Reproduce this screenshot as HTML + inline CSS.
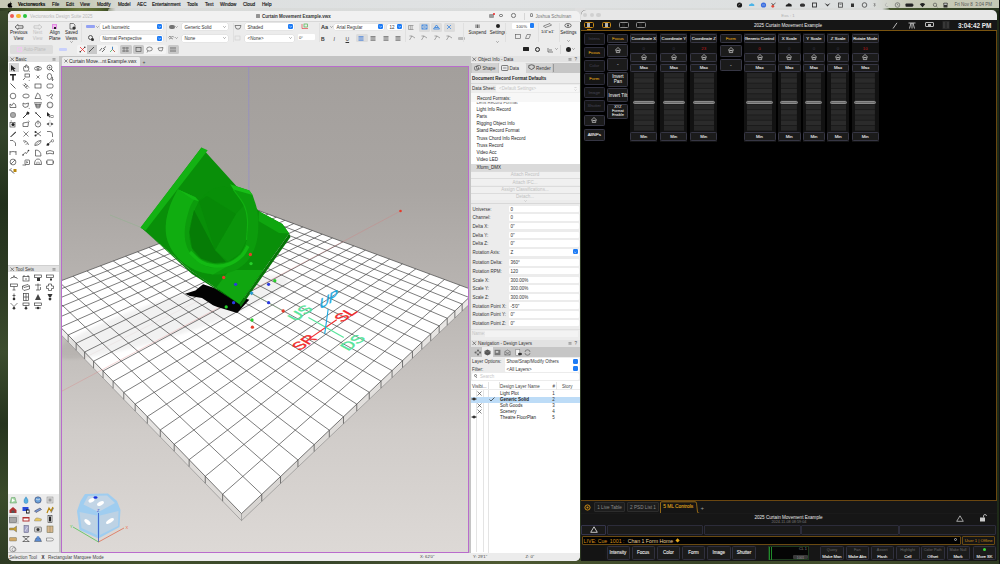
<!DOCTYPE html><html><head><meta charset="utf-8"><style>
*{margin:0;padding:0;box-sizing:border-box}
html,body{width:1000px;height:564px;overflow:hidden;background:#1f2a18;font-family:"Liberation Sans", sans-serif;}
.a{position:absolute}
.t{position:absolute;white-space:nowrap;line-height:1}
</style></head><body>
<div class="a" style="left:0px;top:0px;width:1000px;height:564px;background:linear-gradient(90deg,#26331e 0%,#34452a 30%,#2a3520 60%,#1e2a18 100%);"></div><div class="a" style="left:0px;top:11px;width:8px;height:550px;background:linear-gradient(180deg,#3a4a2c 0%,#2a3822 10%,#34442a 22%,#22301c 35%,#2e3c24 50%,#3c4c2e 62%,#26341e 75%,#3a4a2a 88%,#2e3c24 100%);"></div><div class="a" style="left:0px;top:8.2px;width:1000px;height:3px;background:linear-gradient(90deg,#2e3c24,#4a5a2c 2%,#5e6e34 4%,#52622e 6%,#6a7a3c 8%,#55652e 10%,#3a4a28 11%);"></div><div class="a" style="left:108px;top:8.3px;width:782px;height:3px;background:linear-gradient(90deg,#9aa08a,#d8dad8 1%,#dadcdc 50%,#d8dad8 99%,#6a7a5a);border-radius:3px 3px 0 0"></div><div class="a" style="left:575px;top:8.3px;width:10px;height:14px;background:#dedede;"></div><div class="a" style="left:890px;top:8.2px;width:110px;height:3px;background:linear-gradient(90deg,#4a5a30,#3a4a28 40%,#2a3520);"></div><div class="a" style="left:0px;top:0px;width:999px;height:8.4px;background:linear-gradient(90deg,#c6c9b6 0%,#c9ccba 9%,#dcdfdf 13%,#e0e2e3 50%,#dcdfdf 87%,#c8cbb8 91%,#c4c7b4 100%);"></div><div class="a" style="left:0px;top:560px;width:1000px;height:4px;background:linear-gradient(90deg,#2e3a22,#44522c 15%,#36442a 30%,#4e5a32 50%,#3a4628 70%,#46522e 85%,#2e3a22);"></div><div class="a" style="left:999px;top:0px;width:1px;height:564px;background:#111;"></div><svg class="a" style="left:6.8px;top:1.2px;" width="6" height="7" viewBox="0 0 6 7"><path d="M3,2.3 Q4.2,1.8 5,2.5 Q4.2,3.2 4.4,4.2 Q4.6,5.2 5.4,5.4 Q4.8,6.8 4,6.7 Q3.5,6.5 3,6.6 Q2.5,6.7 2,6.7 Q0.8,6.2 0.6,4.4 Q0.6,2.4 2.2,2.2 Q2.6,2.2 3,2.3 Z M3,2 Q3.1,0.8 4.1,0.6 Q4.1,1.7 3,2 Z" fill="#000"/></svg><div class="t" style="left:18px;top:3.37px;font-size:4.6px;color:#0a0a0a;font-weight:bold;-webkit-text-stroke:0.12px #0a0a0a;">Vectorworks</div><div class="t" style="left:52px;top:3.37px;font-size:4.6px;color:#0a0a0a;font-weight:normal;-webkit-text-stroke:0.12px #0a0a0a;">File</div><div class="t" style="left:66px;top:3.37px;font-size:4.6px;color:#0a0a0a;font-weight:normal;-webkit-text-stroke:0.12px #0a0a0a;">Edit</div><div class="t" style="left:80px;top:3.37px;font-size:4.6px;color:#0a0a0a;font-weight:normal;-webkit-text-stroke:0.12px #0a0a0a;">View</div><div class="t" style="left:97px;top:3.37px;font-size:4.6px;color:#0a0a0a;font-weight:normal;-webkit-text-stroke:0.12px #0a0a0a;">Modify</div><div class="t" style="left:118px;top:3.37px;font-size:4.6px;color:#0a0a0a;font-weight:normal;-webkit-text-stroke:0.12px #0a0a0a;">Model</div><div class="t" style="left:137px;top:3.37px;font-size:4.6px;color:#0a0a0a;font-weight:normal;-webkit-text-stroke:0.12px #0a0a0a;">AEC</div><div class="t" style="left:152px;top:3.37px;font-size:4.6px;color:#0a0a0a;font-weight:normal;-webkit-text-stroke:0.12px #0a0a0a;">Entertainment</div><div class="t" style="left:187px;top:3.37px;font-size:4.6px;color:#0a0a0a;font-weight:normal;-webkit-text-stroke:0.12px #0a0a0a;">Tools</div><div class="t" style="left:205px;top:3.37px;font-size:4.6px;color:#0a0a0a;font-weight:normal;-webkit-text-stroke:0.12px #0a0a0a;">Text</div><div class="t" style="left:220px;top:3.37px;font-size:4.6px;color:#0a0a0a;font-weight:normal;-webkit-text-stroke:0.12px #0a0a0a;">Window</div><div class="t" style="left:243px;top:3.37px;font-size:4.6px;color:#0a0a0a;font-weight:normal;-webkit-text-stroke:0.12px #0a0a0a;">Cloud</div><div class="t" style="left:262px;top:3.37px;font-size:4.6px;color:#0a0a0a;font-weight:normal;-webkit-text-stroke:0.12px #0a0a0a;">Help</div><div class="t" style="left:954.5px;top:3.42px;font-size:4.5px;color:#555;font-weight:normal;">Fri Nov 8&nbsp; 3:04 PM</div><svg class="a" style="left:735.5px;top:1.5px;" width="7" height="6" viewBox="0 0 7 6"><circle cx="3.5" cy="3" r="2.6" fill="#1a1a1a"/><path d="M2,3.5 L4.5,1.8" stroke="#bbb" stroke-width="0.5"/></svg><svg class="a" style="left:748.0px;top:1.5px;" width="7" height="6" viewBox="0 0 7 6"><path d="M1,4 Q0.5,2 2.5,2 Q3.5,0.5 5,1.8 Q6.8,2 6.3,4 Z" fill="#4ab4e8"/></svg><svg class="a" style="left:759.5px;top:1.5px;" width="7" height="6" viewBox="0 0 7 6"><circle cx="3.5" cy="3" r="2.6" fill="#3a6ee0"/><path d="M2,3 H5" stroke="#cde" stroke-width="0.5"/></svg><svg class="a" style="left:769.5px;top:1.5px;" width="7" height="6" viewBox="0 0 7 6"><path d="M1.5,1 L3,3 L5.5,1 M3,3 V5" stroke="#333" stroke-width="0.7" fill="none"/><circle cx="2.8" cy="4.3" r="1.4" fill="#e04a3a"/></svg><svg class="a" style="left:784.5px;top:1.5px;" width="7" height="6" viewBox="0 0 7 6"><path d="M0.8,4.5 Q0.3,2.3 2.5,2.2 Q3.5,0.3 5.2,1.8 Q7.2,2 6.6,4.5 Z" fill="#222"/></svg><svg class="a" style="left:799.0px;top:1.5px;" width="7" height="6" viewBox="0 0 7 6"><path d="M1,3 Q1,1 3.5,1.5 Q6,1 6,3 Q6.5,5 3.5,4.8 Q0.5,5 1,3 Z" fill="#333"/></svg><svg class="a" style="left:811.0px;top:1.5px;" width="7" height="6" viewBox="0 0 7 6"><rect x="1.5" y="1" width="4" height="4" fill="none" stroke="#333" stroke-width="0.9"/></svg><svg class="a" style="left:824.0px;top:1.5px;" width="7" height="6" viewBox="0 0 7 6"><path d="M0.5,1 L3.5,4.5 L6.5,1 L3.5,2.8 Z" fill="#333"/></svg><svg class="a" style="left:836.5px;top:1.5px;" width="7" height="6" viewBox="0 0 7 6"><rect x="1.5" y="1" width="4" height="4.2" fill="none" stroke="#444" stroke-width="0.8"/><path d="M2.5,2.5 H4.5" stroke="#444" stroke-width="0.5"/></svg><svg class="a" style="left:849.0px;top:1.5px;" width="7" height="6" viewBox="0 0 7 6"><path d="M2,1.5 H5 V5 H2 Z" fill="#333"/></svg><svg class="a" style="left:860.5px;top:1.5px;" width="7" height="6" viewBox="0 0 7 6"><circle cx="3.5" cy="3" r="2.3" fill="none" stroke="#444" stroke-width="0.8"/></svg><svg class="a" style="left:871.0px;top:1.5px;" width="7" height="6" viewBox="0 0 7 6"><path d="M2.5,1.5 L4.5,3.5 L3.5,4.5 V1 L4.5,2 L2.5,4" stroke="#777" stroke-width="0.5" fill="none"/></svg><svg class="a" style="left:882.5px;top:1.5px;" width="7" height="6" viewBox="0 0 7 6"><path d="M4,1 Q1.5,1.8 2.5,4 Q3.8,5.2 5.2,4.3" stroke="#aaa" stroke-width="0.6" fill="none"/></svg><svg class="a" style="left:894.0px;top:1.5px;" width="7" height="6" viewBox="0 0 7 6"><circle cx="3.5" cy="3" r="2.3" fill="none" stroke="#555" stroke-width="0.6"/><path d="M3.5,1.8 L3.5,3 L4.5,3.6" stroke="#555" stroke-width="0.5" fill="none"/></svg><svg class="a" style="left:905.2px;top:1.5px;" width="9" height="6" viewBox="0 0 9 6"><rect x="0.5" y="1.5" width="7.5" height="3.2" rx="0.8" fill="#222"/><rect x="8.2" y="2.5" width="0.6" height="1.2" fill="#222"/></svg><svg class="a" style="left:919.0px;top:1.5px;" width="7" height="6" viewBox="0 0 7 6"><path d="M0.8,2.2 Q3.5,-0.2 6.2,2.2 L3.5,5.2 Z" fill="#222"/></svg><svg class="a" style="left:931.5px;top:1.5px;" width="7" height="6" viewBox="0 0 7 6"><circle cx="3" cy="2.8" r="1.7" fill="none" stroke="#444" stroke-width="0.6"/><path d="M4.2,4 L5.5,5.2" stroke="#444" stroke-width="0.6"/></svg><svg class="a" style="left:941.5px;top:1.5px;" width="7" height="6" viewBox="0 0 7 6"><rect x="1.5" y="0.8" width="4" height="4.8" rx="0.5" fill="#333"/><rect x="2.2" y="1.5" width="2.6" height="1.4" fill="#ccc"/></svg><div class="a" style="left:7.5px;top:11px;width:572.5px;height:550px;background:#ececec;border-radius:5px"></div><div class="a" style="left:7.5px;top:11px;width:572.5px;height:10px;background:#f1f1f1;border-radius:5px 5px 0 0"></div><div class="a" style="left:7.5px;top:20.6px;width:572.5px;height:0.6px;background:#d8d8d8;"></div><div class="a" style="left:9.8px;top:13.8px;width:4.4px;height:4.4px;border-radius:50%;background:#ee5b55"></div><div class="a" style="left:16.400000000000002px;top:13.8px;width:4.4px;height:4.4px;border-radius:50%;background:#f5b731"></div><div class="a" style="left:23.0px;top:13.8px;width:4.4px;height:4.4px;border-radius:50%;background:#2bc43f"></div><div class="t" style="left:30px;top:15.13px;font-size:4.5px;color:#b9b9b9;font-weight:normal;">Vectorworks Design Suite 2025</div><div class="a" style="left:255.5px;top:13.5px;width:4px;height:4.5px;background:#555;border-radius:0.5px;opacity:0.6"></div><div class="t" style="left:262px;top:14.93px;font-size:4.5px;color:#333;font-weight:bold;">Curtain Movement Example.vwx</div><div class="a" style="left:489px;top:13.5px;width:5px;height:4px;background:#777;border-radius:1px;opacity:0.7"></div><div class="a" style="left:492.5px;top:12.8px;width:2.2px;height:2.2px;border-radius:50%;background:#e22"></div><div class="a" style="left:499px;top:13.5px;width:3.5px;height:3.5px;border-radius:50%;border:0.7px solid #666"></div><div class="a" style="left:511px;top:13.2px;width:4.5px;height:4.5px;border-radius:50%;border:0.8px solid #777"></div><div class="a" style="left:524px;top:12.5px;width:0.5px;height:7px;background:#d6d6d6;"></div><div class="a" style="left:530px;top:13.2px;width:3px;height:4.2px;border-radius:50% 50% 1px 1px;border:0.6px solid #888"></div><div class="t" style="left:535.5px;top:14.83px;font-size:4.5px;color:#777;font-weight:normal;">Joshua Schulman</div><svg class="a" style="left:13.7px;top:23.6px;" width="10" height="6" viewBox="0 0 10 6"><path d="M1,3 L4,0.5 L4,1.8 L9,1.8 L9,4.2 L4,4.2 L4,5.5 Z" fill="none" stroke="#333" stroke-width="0.7"/></svg><svg class="a" style="left:32.6px;top:23.6px;" width="10" height="6" viewBox="0 0 10 6"><path d="M9,3 L6,0.5 L6,1.8 L1,1.8 L1,4.2 L6,4.2 L6,5.5 Z" fill="none" stroke="#bbb" stroke-width="0.7"/></svg><div class="t" style="left:-31.3px;width:100px;text-align:center;top:31.43px;font-size:4.5px;color:#222;font-weight:normal;">Previous</div><div class="t" style="left:-31.3px;width:100px;text-align:center;top:36.82px;font-size:4.5px;color:#222;font-weight:normal;">View</div><div class="t" style="left:-12.399999999999999px;width:100px;text-align:center;top:31.43px;font-size:4.5px;color:#c0c0c0;font-weight:normal;">Next</div><div class="t" style="left:-12.399999999999999px;width:100px;text-align:center;top:36.82px;font-size:4.5px;color:#c0c0c0;font-weight:normal;">View</div><div class="a" style="left:52.2px;top:23.5px;width:5px;height:5.5px;background:#f0b8f0;border:0.6px solid #e28ae2"></div><div class="a" style="left:54px;top:26.5px;width:1.8px;height:2px;background:#222;"></div><div class="t" style="left:4.700000000000003px;width:100px;text-align:center;top:31.43px;font-size:4.5px;color:#222;font-weight:normal;">Align</div><div class="t" style="left:4.700000000000003px;width:100px;text-align:center;top:36.82px;font-size:4.5px;color:#222;font-weight:normal;">Plane</div><svg class="a" style="left:68.5px;top:23px;" width="7" height="6.5" viewBox="0 0 7 6.5"><path d="M1,0.5 H4.5 L6,2 V6 H1 Z" fill="none" stroke="#333" stroke-width="0.6"/><circle cx="5" cy="5" r="1.6" fill="#333"/></svg><div class="t" style="left:21.400000000000006px;width:100px;text-align:center;top:31.43px;font-size:4.5px;color:#222;font-weight:normal;">Saved</div><div class="t" style="left:21.400000000000006px;width:100px;text-align:center;top:36.82px;font-size:4.5px;color:#222;font-weight:normal;">Views</div><svg class="a" style="left:69.8px;top:41px;" width="3" height="2" viewBox="0 0 3 2"><path d="M0.3,0.3 L1.5,1.5 L2.7,0.3" fill="none" stroke="#555" stroke-width="0.5"/></svg><div class="a" style="left:81.3px;top:22.5px;width:0.5px;height:19px;background:#e0e0e0;"></div><div class="a" style="left:86px;top:25px;width:9px;height:3px;background:#7d8ef5;border-radius:1px;opacity:0.8"></div><svg class="a" style="left:95.5px;top:25.5px;" width="3" height="2" viewBox="0 0 3 2"><path d="M0.3,0.3 L1.5,1.5 L2.7,0.3" fill="none" stroke="#555" stroke-width="0.5"/></svg><div class="a" style="left:100px;top:23.3px;width:62.5px;height:6.8px;background:#fff;border-radius:1.5px;box-shadow:0 0 0 0.3px #d0d0d0"></div><div class="t" style="left:102.5px;top:25.62px;font-size:4.5px;color:#333;font-weight:normal;">Left Isometric</div><div class="a" style="left:156.7px;top:24.1px;width:5.2px;height:5.2px;background:#1e7cf5;border-radius:1.2px"></div><svg class="a" style="left:156.7px;top:24.1px;" width="5.2" height="5.2" viewBox="0 0 5.2 5.2"><path d="M1.5,2.1 L2.6,3.2 L3.7,2.1" fill="none" stroke="#fff" stroke-width="0.6"/></svg><div class="a" style="left:100px;top:34.8px;width:62.5px;height:6.8px;background:#fff;border-radius:1.5px;box-shadow:0 0 0 0.3px #d0d0d0"></div><div class="t" style="left:102.5px;top:37.12px;font-size:4.5px;color:#333;font-weight:normal;">Normal Perspective</div><div class="a" style="left:156.7px;top:35.599999999999994px;width:5.2px;height:5.2px;background:#1e7cf5;border-radius:1.2px"></div><svg class="a" style="left:156.7px;top:35.599999999999994px;" width="5.2" height="5.2" viewBox="0 0 5.2 5.2"><path d="M1.5,2.1 L2.6,3.2 L3.7,2.1" fill="none" stroke="#fff" stroke-width="0.6"/></svg><div class="a" style="left:87.5px;top:34.5px;width:5.5px;height:5.5px;border-radius:50%;border:0.7px solid #555"></div><div class="a" style="left:90.5px;top:37.5px;width:3px;height:3px;border-radius:50%;background:#333"></div><div class="a" style="left:165.5px;top:22.5px;width:0.5px;height:19px;background:#e0e0e0;"></div><div class="a" style="left:168.5px;top:24.5px;width:6px;height:4.5px;background:#555;border-radius:2px;opacity:0.8"></div><svg class="a" style="left:175px;top:25.5px;" width="3" height="2" viewBox="0 0 3 2"><path d="M0.3,0.3 L1.5,1.5 L2.7,0.3" fill="none" stroke="#555" stroke-width="0.5"/></svg><svg class="a" style="left:168px;top:35px;" width="7" height="5" viewBox="0 0 7 5"><path d="M0.5,2.5 L2,1 L3,2.5 L4.5,1 L6,2.5 M1,4 L3,3 L5,4" fill="none" stroke="#555" stroke-width="0.6"/></svg><svg class="a" style="left:175px;top:37px;" width="3" height="2" viewBox="0 0 3 2"><path d="M0.3,0.3 L1.5,1.5 L2.7,0.3" fill="none" stroke="#555" stroke-width="0.5"/></svg><div class="a" style="left:182px;top:23.3px;width:46px;height:6.8px;background:#fff;border-radius:1.5px;box-shadow:0 0 0 0.3px #d0d0d0"></div><div class="t" style="left:184.5px;top:25.62px;font-size:4.5px;color:#333;font-weight:normal;">Generic Solid</div><svg class="a" style="left:223px;top:25.7px;" width="3" height="2" viewBox="0 0 3 2"><path d="M0.3,0.3 L1.5,1.5 L2.7,0.3" fill="none" stroke="#555" stroke-width="0.5"/></svg><div class="a" style="left:182px;top:34.8px;width:46px;height:6.8px;background:#fff;border-radius:1.5px;box-shadow:0 0 0 0.3px #d0d0d0"></div><div class="t" style="left:184.5px;top:37.12px;font-size:4.5px;color:#333;font-weight:normal;">None</div><svg class="a" style="left:223px;top:37.199999999999996px;" width="3" height="2" viewBox="0 0 3 2"><path d="M0.3,0.3 L1.5,1.5 L2.7,0.3" fill="none" stroke="#555" stroke-width="0.5"/></svg><div class="a" style="left:233px;top:22.5px;width:0.5px;height:19px;background:#e0e0e0;"></div><svg class="a" style="left:233.5px;top:24px;" width="8" height="6" viewBox="0 0 8 6"><path d="M1,1.5 H7 L6,4.5 Q4,5.8 2,4.5 Z" fill="none" stroke="#555" stroke-width="0.7"/></svg><svg class="a" style="left:234px;top:35px;" width="7" height="6" viewBox="0 0 7 6"><rect x="1" y="1" width="5" height="4" fill="none" stroke="#ccc" stroke-width="0.6"/></svg><div class="a" style="left:245px;top:23.3px;width:49px;height:6.8px;background:#fff;border-radius:1.5px;box-shadow:0 0 0 0.3px #d0d0d0"></div><div class="t" style="left:247.5px;top:25.62px;font-size:4.5px;color:#333;font-weight:normal;">Shaded</div><div class="a" style="left:288.2px;top:24.1px;width:5.2px;height:5.2px;background:#1e7cf5;border-radius:1.2px"></div><svg class="a" style="left:288.2px;top:24.1px;" width="5.2" height="5.2" viewBox="0 0 5.2 5.2"><path d="M1.5,2.1 L2.6,3.2 L3.7,2.1" fill="none" stroke="#fff" stroke-width="0.6"/></svg><div class="a" style="left:245px;top:34.8px;width:49px;height:6.8px;background:#fff;border-radius:1.5px;box-shadow:0 0 0 0.3px #d0d0d0"></div><div class="t" style="left:247.5px;top:37.12px;font-size:4.5px;color:#333;font-weight:normal;">&lt;None&gt;</div><svg class="a" style="left:289px;top:37.199999999999996px;" width="3" height="2" viewBox="0 0 3 2"><path d="M0.3,0.3 L1.5,1.5 L2.7,0.3" fill="none" stroke="#555" stroke-width="0.5"/></svg><svg class="a" style="left:301px;top:22.5px;" width="8" height="7" viewBox="0 0 8 7"><path d="M1,5.5 H7 M1,1 V5.5" stroke="#d33" stroke-width="0.6" fill="none"/><rect x="3" y="1" width="3.5" height="3" fill="none" stroke="#3a3" stroke-width="0.6"/></svg><div class="a" style="left:297.5px;top:33.8px;width:17px;height:6.5px;background:#fff;border-radius:1px"></div><div class="t" style="left:299px;top:35.99px;font-size:4.2px;color:#333;font-weight:normal;">0°</div><div class="a" style="left:318.5px;top:22.5px;width:0.5px;height:19px;background:#e0e0e0;"></div><div class="t" style="left:321px;top:25.28px;font-size:5.5px;color:#333;font-weight:bold;">Aa</div><svg class="a" style="left:329.5px;top:25.5px;" width="3" height="2" viewBox="0 0 3 2"><path d="M0.3,0.3 L1.5,1.5 L2.7,0.3" fill="none" stroke="#555" stroke-width="0.5"/></svg><div class="a" style="left:334px;top:23.5px;width:50px;height:6.8px;background:#fff;border-radius:1.5px;box-shadow:0 0 0 0.3px #d0d0d0"></div><div class="t" style="left:336.5px;top:25.82px;font-size:4.5px;color:#333;font-weight:normal;">Arial Regular</div><div class="a" style="left:378.2px;top:24.3px;width:5.2px;height:5.2px;background:#1e7cf5;border-radius:1.2px"></div><svg class="a" style="left:378.2px;top:24.3px;" width="5.2" height="5.2" viewBox="0 0 5.2 5.2"><path d="M1.5,2.1 L2.6,3.2 L3.7,2.1" fill="none" stroke="#fff" stroke-width="0.6"/></svg><div class="a" style="left:387px;top:23.5px;width:15.5px;height:6.8px;background:#fff;border-radius:1.5px;box-shadow:0 0 0 0.3px #d0d0d0"></div><div class="t" style="left:389.5px;top:25.82px;font-size:4.5px;color:#333;font-weight:normal;">12</div><div class="a" style="left:396.7px;top:24.3px;width:5.2px;height:5.2px;background:#1e7cf5;border-radius:1.2px"></div><svg class="a" style="left:396.7px;top:24.3px;" width="5.2" height="5.2" viewBox="0 0 5.2 5.2"><path d="M1.5,2.1 L2.6,3.2 L3.7,2.1" fill="none" stroke="#fff" stroke-width="0.6"/></svg><div class="t" style="left:321.0px;top:36.75px;font-size:5px;color:#333;font-weight:bold;">B</div><div class="t" style="left:333.5px;top:36.75px;font-size:5px;color:#333;font-weight:normal;font-style:italic;">I</div><div class="t" style="left:345.5px;top:36.75px;font-size:5px;color:#333;font-weight:normal;text-decoration:underline;">U</div><div class="a" style="left:355.5px;top:33.5px;width:12px;height:8.5px;background:#dcdcdc;border-radius:1.5px"></div><svg class="a" style="left:358px;top:35.5px;" width="6" height="5" viewBox="0 0 6 5"><line x1="0.5" x2="5.5" y1="0.5" y2="0.5" stroke="#2b6fd6" stroke-width="0.6"/><line x1="0.5" x2="5.5" y1="1.8" y2="1.8" stroke="#2b6fd6" stroke-width="0.6"/><line x1="0.5" x2="5.5" y1="3.1" y2="3.1" stroke="#2b6fd6" stroke-width="0.6"/><line x1="0.5" x2="5.5" y1="4.4" y2="4.4" stroke="#2b6fd6" stroke-width="0.6"/></svg><svg class="a" style="left:370px;top:35.5px;" width="6" height="5" viewBox="0 0 6 5"><line x1="0.5" x2="5.5" y1="0.5" y2="0.5" stroke="#444" stroke-width="0.6"/><line x1="0.5" x2="5.5" y1="1.8" y2="1.8" stroke="#444" stroke-width="0.6"/><line x1="0.5" x2="5.5" y1="3.1" y2="3.1" stroke="#444" stroke-width="0.6"/><line x1="0.5" x2="5.5" y1="4.4" y2="4.4" stroke="#444" stroke-width="0.6"/></svg><svg class="a" style="left:383px;top:35.5px;" width="6" height="5" viewBox="0 0 6 5"><line x1="0.5" x2="5.5" y1="0.5" y2="0.5" stroke="#444" stroke-width="0.6"/><line x1="0.5" x2="5.5" y1="1.8" y2="1.8" stroke="#444" stroke-width="0.6"/><line x1="0.5" x2="5.5" y1="3.1" y2="3.1" stroke="#444" stroke-width="0.6"/><line x1="0.5" x2="5.5" y1="4.4" y2="4.4" stroke="#444" stroke-width="0.6"/></svg><svg class="a" style="left:395px;top:35.5px;" width="6" height="5" viewBox="0 0 6 5"><line x1="0.5" x2="5.5" y1="0.5" y2="0.5" stroke="#444" stroke-width="0.6"/><line x1="0.5" x2="5.5" y1="1.8" y2="1.8" stroke="#444" stroke-width="0.6"/><line x1="0.5" x2="5.5" y1="3.1" y2="3.1" stroke="#444" stroke-width="0.6"/><line x1="0.5" x2="5.5" y1="4.4" y2="4.4" stroke="#444" stroke-width="0.6"/></svg><div class="a" style="left:405px;top:22.5px;width:0.5px;height:19px;background:#e0e0e0;"></div><svg class="a" style="left:408px;top:25px;" width="7" height="5" viewBox="0 0 7 5"><path d="M0.5,0.5 V4.5 M2.3,0.5 V4.5 M4.1,0.5 V4.5 M0.5,0.5 H5.5 M0.5,4.5 H5.5" stroke="#666" stroke-width="0.5" fill="none"/></svg><div class="a" style="left:418.5px;top:22.5px;width:11px;height:9px;background:#dcdcdc;border-radius:1.5px"></div><div class="a" style="left:431px;top:22.5px;width:11px;height:9px;background:#dcdcdc;border-radius:1.5px"></div><div class="a" style="left:443.5px;top:22.5px;width:11px;height:9px;background:#dcdcdc;border-radius:1.5px"></div><svg class="a" style="left:420.5px;top:24px;" width="7" height="6" viewBox="0 0 7 6"><rect x="1" y="1" width="5" height="4" fill="none" stroke="#2b7de0" stroke-width="0.8"/><path d="M1,1 L6,5 M6,1 L1,5" stroke="#2b7de0" stroke-width="0.5"/></svg><svg class="a" style="left:433px;top:24px;" width="7" height="6" viewBox="0 0 7 6"><path d="M0.5,5 L3.5,1 L6.5,5 Z M2,3.5 H5" fill="none" stroke="#2b7de0" stroke-width="0.8"/></svg><svg class="a" style="left:446px;top:24px;" width="6" height="6" viewBox="0 0 6 6"><path d="M1,1 L5,5 M5,1 L1,5" stroke="#2b7de0" stroke-width="0.7"/></svg><svg class="a" style="left:408.5px;top:35px;" width="7" height="6" viewBox="0 0 7 6"><path d="M0.5,5 L3,1 L6,3 M0.5,1 H3" fill="none" stroke="#777" stroke-width="0.6"/></svg><svg class="a" style="left:421px;top:35px;" width="7" height="6" viewBox="0 0 7 6"><path d="M0.5,5 L3,1 L6,3 M0.5,1 H3" fill="none" stroke="#777" stroke-width="0.6"/></svg><svg class="a" style="left:433.5px;top:35px;" width="7" height="6" viewBox="0 0 7 6"><path d="M0.5,5 L3,1 L6,3 M0.5,1 H3" fill="none" stroke="#777" stroke-width="0.6"/></svg><svg class="a" style="left:446px;top:35px;" width="7" height="6" viewBox="0 0 7 6"><path d="M0.5,5 L3,1 L6,3 M0.5,1 H3" fill="none" stroke="#777" stroke-width="0.6"/></svg><div class="a" style="left:457.5px;top:36.5px;width:7px;height:3px;background:#999;border-radius:1px;opacity:0.6"></div><div class="a" style="left:463px;top:22.5px;width:0.5px;height:19px;background:#e0e0e0;"></div><svg class="a" style="left:474.8px;top:23.5px;" width="5" height="4.5" viewBox="0 0 5 4.5"><path d="M1,0.5 V4 M2.5,0.5 V4 M4,0.5 V4" stroke="#444" stroke-width="0.8"/></svg><div class="t" style="left:427.3px;width:100px;text-align:center;top:31.12px;font-size:4.5px;color:#222;font-weight:normal;">Suspend</div><div class="a" style="left:495.5px;top:23.5px;width:4.5px;height:4.5px;border-radius:50%;background:#222"></div><div class="t" style="left:447.8px;width:100px;text-align:center;top:31.12px;font-size:4.5px;color:#222;font-weight:normal;">Settings</div><svg class="a" style="left:496.3px;top:41px;" width="3" height="2" viewBox="0 0 3 2"><path d="M0.3,0.3 L1.5,1.5 L2.7,0.3" fill="none" stroke="#555" stroke-width="0.5"/></svg><div class="a" style="left:505px;top:22.5px;width:0.5px;height:19px;background:#e0e0e0;"></div><div class="a" style="left:512px;top:23px;width:21.5px;height:6px;background:#fff;border-radius:1px"></div><div class="t" style="left:516px;top:24.93px;font-size:4.3px;color:#333;font-weight:normal;">100%</div><div class="a" style="left:529.5px;top:23.3px;width:4.2px;height:4.4px;background:#1e7cf5;border-radius:1px"></div><svg class="a" style="left:513.5px;top:33px;" width="8" height="7" viewBox="0 0 8 7"><rect x="1.5" y="1.5" width="5" height="4" fill="none" stroke="#555" stroke-width="0.6"/></svg><svg class="a" style="left:523.5px;top:33px;" width="8" height="7" viewBox="0 0 8 7"><path d="M1.5,5.5 L3,1.5 H6.5 L5,5.5 Z" fill="none" stroke="#555" stroke-width="0.6"/></svg><div class="a" style="left:538px;top:22.5px;width:0.5px;height:19px;background:#e0e0e0;"></div><svg class="a" style="left:543px;top:23px;" width="9" height="5" viewBox="0 0 9 5"><path d="M0.5,3 L7,0.5 L8.5,2.2 L2,4.6 Z" fill="none" stroke="#444" stroke-width="0.6"/></svg><div class="t" style="left:497.5px;width:100px;text-align:center;top:30.43px;font-size:4.3px;color:#222;font-weight:normal;">1/4"=1'</div><div class="a" style="left:558.5px;top:22.5px;width:0.5px;height:19px;background:#e0e0e0;"></div><svg class="a" style="left:564px;top:22.5px;" width="8" height="6" viewBox="0 0 8 6"><ellipse cx="4" cy="2.5" rx="3.2" ry="2" fill="none" stroke="#444" stroke-width="0.7"/><circle cx="4" cy="2.5" r="0.9" fill="#444"/></svg><div class="t" style="left:518.5px;width:100px;text-align:center;top:30.62px;font-size:4.5px;color:#222;font-weight:normal;">Settings</div><svg class="a" style="left:567px;top:39.5px;" width="3" height="2" viewBox="0 0 3 2"><path d="M0.3,0.3 L1.5,1.5 L2.7,0.3" fill="none" stroke="#555" stroke-width="0.5"/></svg><div class="a" style="left:9.5px;top:45px;width:43.5px;height:8.6px;background:#dcdcdc;border-radius:1.5px"></div><div class="a" style="left:17px;top:46.5px;width:5px;height:5px;background:none;border:0.6px solid #f0c8f0"></div><div class="t" style="left:23.5px;top:48.32px;font-size:4.5px;color:#bdbdbd;font-weight:normal;">Auto-Plane</div><div class="a" style="left:53.5px;top:45px;width:20px;height:8.6px;background:#ececec;border-radius:1.5px"></div><div class="a" style="left:59px;top:48px;width:8px;height:2.5px;background:#c9d0fb;border-radius:1px"></div><div class="a" style="left:76.5px;top:45px;width:41.5px;height:8.6px;background:#f4f4f4;border-radius:1.5px"></div><div class="a" style="left:86.5px;top:45px;width:10px;height:8.6px;background:#c8c8c8;"></div><svg class="a" style="left:78.5px;top:46px;" width="7" height="7" viewBox="0 0 7 7"><path d="M1,1 L6,6 M6,1 L1,6" stroke="#e33" stroke-width="0.8"/><circle cx="1.2" cy="5.8" r="0.8" fill="#333"/><circle cx="5.8" cy="1.2" r="0.8" fill="#333"/></svg><svg class="a" style="left:88px;top:46px;" width="7" height="7" viewBox="0 0 7 7"><path d="M1,6 L6,1" stroke="#333" stroke-width="0.8"/></svg><svg class="a" style="left:99px;top:46px;" width="8" height="7" viewBox="0 0 8 7"><path d="M0.5,5 L3,2 M3,6 L6,3 M4,3 L7,0.5" stroke="#333" stroke-width="0.7"/></svg><svg class="a" style="left:109px;top:46px;" width="7" height="7" viewBox="0 0 7 7"><path d="M3.5,3.5 V0.8 M3.5,3.5 L1,6 M3.5,3.5 L6,6" stroke="#2aa64a" stroke-width="0.7"/><path d="M3.5,3.5 L6,6" stroke="#e44" stroke-width="0.7"/><path d="M3.5,3.5 V0.8" stroke="#3a6ee8" stroke-width="0.7"/></svg><div class="a" style="left:120px;top:45px;width:11.5px;height:8.6px;background:#c8c8c8;border-radius:1.5px"></div><svg class="a" style="left:121px;top:46px;" width="9" height="7" viewBox="0 0 9 7"><path d="M1,2 H8 M1,5 H8 M3,1 V6 M6,1 V6" stroke="#555" stroke-width="0.6"/></svg><div class="a" style="left:133px;top:45px;width:32.5px;height:8.6px;background:#f4f4f4;border-radius:1.5px"></div><div class="a" style="left:133px;top:45px;width:11px;height:8.6px;background:#c8c8c8;border-radius:1.5px"></div><svg class="a" style="left:135px;top:46px;" width="7" height="7" viewBox="0 0 7 7"><rect x="1" y="1.5" width="5" height="4" fill="none" stroke="#444" stroke-width="0.6"/></svg><svg class="a" style="left:146px;top:46px;" width="7" height="7" viewBox="0 0 7 7"><ellipse cx="3.5" cy="3" rx="2.8" ry="2" fill="none" stroke="#444" stroke-width="0.6"/><path d="M2,5 L1,6.5" stroke="#444" stroke-width="0.6"/></svg><svg class="a" style="left:156.5px;top:46px;" width="7" height="7" viewBox="0 0 7 7"><path d="M1,2 L6,1.5 L5,5 L2,4.5 Z" fill="none" stroke="#444" stroke-width="0.6"/></svg><div class="a" style="left:167.5px;top:45px;width:11px;height:8.6px;background:#c8c8c8;border-radius:1.5px"></div><svg class="a" style="left:169px;top:46px;" width="8" height="7" viewBox="0 0 8 7"><path d="M1,2 H7 M1,5 H7 M2,1 V6 M4,1 V6 M6,1 V6" stroke="#666" stroke-width="0.5"/></svg><div class="a" style="left:522.5px;top:47.3px;width:6px;height:4.2px;background:#222;border-radius:0.5px"></div><div class="a" style="left:535px;top:47px;width:5px;height:5px;border-radius:50%;border:1px solid #222;background:#ddd"></div><svg class="a" style="left:546.5px;top:46.5px;" width="8" height="6" viewBox="0 0 8 6"><path d="M1,1 V5 H6 M2,3 H5" fill="none" stroke="#333" stroke-width="0.6"/></svg><svg class="a" style="left:554.5px;top:48px;" width="3" height="2" viewBox="0 0 3 2"><path d="M0.3,0.3 L1.5,1.5 L2.7,0.3" fill="none" stroke="#555" stroke-width="0.5"/></svg><div class="a" style="left:560px;top:45px;width:0.5px;height:9px;background:#d8d8d8;"></div><div class="a" style="left:566px;top:46.5px;width:5px;height:5px;border-radius:50%;background:#222"></div><svg class="a" style="left:571.5px;top:48px;" width="3" height="2" viewBox="0 0 3 2"><path d="M0.3,0.3 L1.5,1.5 L2.7,0.3" fill="none" stroke="#555" stroke-width="0.5"/></svg><div class="a" style="left:7.5px;top:55.5px;width:572.5px;height:497px;background:#c4c4c4;"></div><div class="a" style="left:8px;top:56px;width:51px;height:496px;background:#ffffff;"></div><div class="a" style="left:8px;top:56px;width:51px;height:6px;background:#e2e2e2;"></div><svg class="a" style="left:9.5px;top:57px;" width="5" height="4.5" viewBox="0 0 5 4.5"><path d="M0.5,0.5 L4,4 M4,0.5 L0.5,4" stroke="#444" stroke-width="0.6"/></svg><div class="t" style="left:15.5px;top:58.02px;font-size:4.5px;color:#333;font-weight:normal;">Basic</div><svg class="a" style="left:52px;top:57.5px;" width="4" height="3.5" viewBox="0 0 4 3.5"><path d="M0.5,0.5 H3.5 M0.5,1.7 H3.5 M0.5,2.9 H3.5" stroke="#777" stroke-width="0.6"/></svg><div class="a" style="left:8.5px;top:62.8px;width:10.5px;height:9.3px;background:#d6d6d6;"></div><div class="a" style="left:8px;top:493.5px;width:51px;height:58.5px;background:#ececec;"></div><svg class="a" style="left:9.4px;top:63.5px;" width="8" height="8" viewBox="0 0 8 8"><path d="M2,1 L2,7 L3.5,5.5 L5,7.5 L6,7 L4.8,5 L6.8,5 Z" fill="#222"/></svg><svg class="a" style="left:21.9px;top:63.5px;" width="8" height="8" viewBox="0 0 8 8"><path d="M2,7 L1.5,4 L2.5,2 L3.5,3.5 L3.8,1 L5,1 L5.2,3.5 L6.5,2.5 L6.8,5 L6,7 Z" stroke="#333" stroke-width="0.65" fill="none"/><path d="M6.5,7.8 L7.5,6.8 L7.5,7.8 Z" fill="#222"/></svg><svg class="a" style="left:34px;top:63.5px;" width="8" height="8" viewBox="0 0 8 8"><ellipse cx="4" cy="4.5" rx="3.6" ry="1.8" stroke="#333" stroke-width="0.65" fill="none"/><path d="M2.5,3.5 Q4,0.5 5.5,3.5" stroke="#333" stroke-width="0.65" fill="none"/><circle cx="4" cy="5" r="1" stroke="#333" stroke-width="0.65" fill="none"/></svg><svg class="a" style="left:46px;top:63.5px;" width="8" height="8" viewBox="0 0 8 8"><circle cx="3.5" cy="3.5" r="2.4" stroke="#333" stroke-width="0.65" fill="none"/><path d="M5.2,5.2 L7.5,7.5" stroke="#333" stroke-width="0.9"/><path d="M3.5,2.5 V4.5 M2.5,3.5 H4.5" stroke="#333" stroke-width="0.5"/></svg><svg class="a" style="left:9.4px;top:72.97px;" width="8" height="8" viewBox="0 0 8 8"><path d="M1,1 H7 V2.5 H4.8 V7.5 H3.2 V2.5 H1 Z" fill="#222"/></svg><svg class="a" style="left:21.9px;top:72.97px;" width="8" height="8" viewBox="0 0 8 8"><rect x="3" y="1" width="4.5" height="3" stroke="#333" stroke-width="0.65" fill="none"/><path d="M3,5 L1,7" stroke="#333" stroke-width="0.65" fill="none"/><path d="M6.5,7.8 L7.5,6.8 L7.5,7.8 Z" fill="#222"/></svg><svg class="a" style="left:34px;top:72.97px;" width="8" height="8" viewBox="0 0 8 8"><path d="M2.5,2.5 L5.5,5.5 M5.5,2.5 L2.5,5.5" stroke="#333" stroke-width="0.6"/></svg><svg class="a" style="left:46px;top:72.97px;" width="8" height="8" viewBox="0 0 8 8"><ellipse cx="3.5" cy="3.5" rx="2.2" ry="3" stroke="#333" stroke-width="0.65" fill="none"/><path d="M6.5,4 V7.5 M5.5,6.5 L6.5,7.5 L7.5,6.5" stroke="#333" stroke-width="0.65" fill="none"/></svg><svg class="a" style="left:9.4px;top:82.44px;" width="8" height="8" viewBox="0 0 8 8"><path d="M1.5,1.5 L6.5,6.5" stroke="#333" stroke-width="0.8"/></svg><svg class="a" style="left:21.9px;top:82.44px;" width="8" height="8" viewBox="0 0 8 8"><path d="M1,2.5 L5.5,7 M2.5,1 L7,5.5 M2,4 L4,2 M3.5,5.5 L5.5,3.5" stroke="#333" stroke-width="0.65" fill="none"/></svg><svg class="a" style="left:34px;top:82.44px;" width="8" height="8" viewBox="0 0 8 8"><rect x="1" y="2" width="6" height="4" stroke="#333" stroke-width="0.65" fill="none"/></svg><svg class="a" style="left:46px;top:82.44px;" width="8" height="8" viewBox="0 0 8 8"><rect x="1" y="2" width="6" height="4" rx="1.5" stroke="#333" stroke-width="0.65" fill="none"/></svg><svg class="a" style="left:9.4px;top:91.91px;" width="8" height="8" viewBox="0 0 8 8"><circle cx="4" cy="4" r="2.8" stroke="#333" stroke-width="0.65" fill="none"/></svg><svg class="a" style="left:21.9px;top:91.91px;" width="8" height="8" viewBox="0 0 8 8"><ellipse cx="4" cy="4" rx="3.2" ry="2" stroke="#333" stroke-width="0.65" fill="none"/></svg><svg class="a" style="left:34px;top:91.91px;" width="8" height="8" viewBox="0 0 8 8"><path d="M1,6.5 L3.5,1 Q6.5,2 6.5,6.5 Z" stroke="#333" stroke-width="0.65" fill="none"/><path d="M6.5,7.8 L7.5,6.8 L7.5,7.8 Z" fill="#222"/></svg><svg class="a" style="left:46px;top:91.91px;" width="8" height="8" viewBox="0 0 8 8"><path d="M0.5,3.5 Q3,4.5 4,3 Q5,1 6.5,2.5 Q7,4.5 5,5 Q4,6 6.5,7" stroke="#333" stroke-width="0.65" fill="none"/></svg><svg class="a" style="left:9.4px;top:101.38px;" width="8" height="8" viewBox="0 0 8 8"><path d="M1,6.5 V3 L3,4.5 L4.5,2 L6.5,3.5 L7,6.5 Z" stroke="#333" stroke-width="0.65" fill="none"/></svg><svg class="a" style="left:21.9px;top:101.38px;" width="8" height="8" viewBox="0 0 8 8"><path d="M1,2 L3,3 L6.5,2 L6,5.5 L3,6.5 L1,5 Z" stroke="#333" stroke-width="0.65" fill="none"/><path d="M6.5,7.8 L7.5,6.8 L7.5,7.8 Z" fill="#222"/></svg><svg class="a" style="left:34px;top:101.38px;" width="8" height="8" viewBox="0 0 8 8"><path d="M0.5,1.5 L7.5,1.5 L5.5,7 L2.5,7 Z M2,2 L3,6.5 M4,2 V7 M6,2 L5,6.5 M1,3.5 H7 M1.5,5 H6.5" stroke="#333" stroke-width="0.5" fill="none"/></svg><svg class="a" style="left:46px;top:101.38px;" width="8" height="8" viewBox="0 0 8 8"><circle cx="4" cy="4" r="2.9" stroke="#333" stroke-width="0.65" fill="none"/><circle cx="4" cy="4" r="2.2" stroke="#999" stroke-width="0.4" fill="none"/></svg><svg class="a" style="left:9.4px;top:110.85px;" width="8" height="8" viewBox="0 0 8 8"><circle cx="4" cy="4" r="3" fill="#888"/><circle cx="4" cy="4" r="2" fill="#aaa"/></svg><svg class="a" style="left:21.9px;top:110.85px;" width="8" height="8" viewBox="0 0 8 8"><path d="M1,7 L5,3 M4.5,2 L6,0.8 L7.2,2 L6,3.5 Z" stroke="#222" stroke-width="0.9" fill="#222"/></svg><svg class="a" style="left:34px;top:110.85px;" width="8" height="8" viewBox="0 0 8 8"><path d="M1.5,1.5 L7,7" stroke="#333" stroke-width="0.9"/><path d="M1,3 L3,1 M0.8,1 L3,3" stroke="#333" stroke-width="0.4"/></svg><svg class="a" style="left:46px;top:110.85px;" width="8" height="8" viewBox="0 0 8 8"><path d="M1,1 L1,5.5 L2.2,4.5 L3.2,6.5 L4,6 L3.2,4.2 L4.5,4.2 Z" fill="#222"/><ellipse cx="6" cy="5.5" rx="1.8" ry="1.1" stroke="#333" stroke-width="0.5" fill="none"/></svg><svg class="a" style="left:9.4px;top:120.32000000000001px;" width="8" height="8" viewBox="0 0 8 8"><rect x="1" y="2.5" width="5" height="4.5" fill="none" stroke="#333" stroke-width="0.6"/><circle cx="4" cy="4.5" r="1.6" fill="#222"/><path d="M1.5,1 H3" stroke="#333" stroke-width="0.5"/></svg><svg class="a" style="left:21.9px;top:120.32000000000001px;" width="8" height="8" viewBox="0 0 8 8"><path d="M1,3 L6.5,2 L6,6.5 L1,6.5 Z" stroke="#333" stroke-width="0.65" fill="none"/><path d="M6.5,0.8 L7.5,1.5" stroke="#333" stroke-width="0.65" fill="none"/></svg><svg class="a" style="left:34px;top:120.32000000000001px;" width="8" height="8" viewBox="0 0 8 8"><circle cx="4" cy="4.3" r="2.7" stroke="#333" stroke-width="0.65" fill="none"/><path d="M4,4.3 V2.5 M3.3,1 H4.7" stroke="#333" stroke-width="0.65" fill="none"/></svg><svg class="a" style="left:46px;top:120.32000000000001px;" width="8" height="8" viewBox="0 0 8 8"><path d="M4,0.5 V7.5" stroke="#333" stroke-width="0.5" stroke-dasharray="0.8 0.6"/><path d="M0.5,4 L2.8,2.5 V5.5 Z M7.5,4 L5.2,2.5 V5.5 Z" fill="#333"/></svg><svg class="a" style="left:9.4px;top:129.79000000000002px;" width="8" height="8" viewBox="0 0 8 8"><path d="M1,7 L6.5,1.5 L7,2.5 L2,7 Z" fill="#222"/></svg><svg class="a" style="left:21.9px;top:129.79000000000002px;" width="8" height="8" viewBox="0 0 8 8"><path d="M1.5,1.5 L6.5,6.5 M6.5,1.5 L1.5,6.5" stroke="#333" stroke-width="0.6"/></svg><svg class="a" style="left:34px;top:129.79000000000002px;" width="8" height="8" viewBox="0 0 8 8"><path d="M1,1.5 L7,6 M1,6 L7,1.5" stroke="#333" stroke-width="0.65" fill="none"/><circle cx="1.5" cy="2" r="1" fill="#333"/><circle cx="1.5" cy="5.5" r="1" fill="#333"/></svg><svg class="a" style="left:46px;top:129.79000000000002px;" width="8" height="8" viewBox="0 0 8 8"><path d="M1,1.5 H4 Q6.5,1.5 6.5,4 V7" stroke="#333" stroke-width="0.65" fill="none"/></svg><svg class="a" style="left:9.4px;top:139.26px;" width="8" height="8" viewBox="0 0 8 8"><path d="M1,1.5 H4 L6.5,4 V7" stroke="#333" stroke-width="0.65" fill="none"/></svg><svg class="a" style="left:21.9px;top:139.26px;" width="8" height="8" viewBox="0 0 8 8"><path d="M1,2 Q5,1 6.5,6" stroke="#333" stroke-width="0.65" fill="none"/><path d="M2,4 L4,2.5 M3.5,6 L5.5,4" stroke="#333" stroke-width="0.5"/></svg><svg class="a" style="left:34px;top:139.26px;" width="8" height="8" viewBox="0 0 8 8"><path d="M0.8,6.5 Q1,2 7,1.5 Q7,6 0.8,6.5 Z" stroke="#333" stroke-width="0.65" fill="none"/><path d="M1.5,6 L6,2" stroke="#333" stroke-width="0.4"/></svg><svg class="a" style="left:46px;top:139.26px;" width="8" height="8" viewBox="0 0 8 8"><path d="M0.5,6.5 L5.5,2" stroke="#333" stroke-width="0.7"/><circle cx="2" cy="5.5" r="1.3" fill="#222"/><circle cx="6.5" cy="1.8" r="1.2" stroke="#333" stroke-width="0.5" fill="none"/></svg><svg class="a" style="left:9.4px;top:148.73000000000002px;" width="8" height="8" viewBox="0 0 8 8"><path d="M1,2 V6 M7,2 V6 M1,3 Q4,2 7,3" stroke="#333" stroke-width="0.65" fill="none"/></svg><svg class="a" style="left:21.9px;top:148.73000000000002px;" width="8" height="8" viewBox="0 0 8 8"><path d="M1,6 L3,3.5 L4.5,4.5 L6.5,1.5" stroke="#333" stroke-width="0.65" fill="none"/><circle cx="1" cy="6" r="0.8" fill="#333"/><circle cx="6.5" cy="1.5" r="0.8" fill="#333"/></svg><svg class="a" style="left:34px;top:148.73000000000002px;" width="8" height="8" viewBox="0 0 8 8"><path d="M1.5,1 V7 H7 Q7,1 1.5,1 Z" stroke="#333" stroke-width="0.65" fill="none"/></svg><svg class="a" style="left:46px;top:148.73000000000002px;" width="8" height="8" viewBox="0 0 8 8"><path d="M0.5,2.5 Q4,0.5 7.5,2.5 V5 Q4,3.5 0.5,5 Z" stroke="#333" stroke-width="0.65" fill="none"/></svg><svg class="a" style="left:9.4px;top:158.2px;" width="8" height="8" viewBox="0 0 8 8"><circle cx="4" cy="4" r="2.9" stroke="#333" stroke-width="0.65" fill="none"/><path d="M2,6 L6,2" stroke="#333" stroke-width="0.65" fill="none"/></svg><svg class="a" style="left:21.9px;top:158.2px;" width="8" height="8" viewBox="0 0 8 8"><path d="M0.5,7 H4" stroke="#333" stroke-width="0.65" fill="none"/><rect x="3" y="2" width="4.5" height="4.5" rx="0.5" stroke="#333" stroke-width="0.65" fill="none"/><path d="M4.5,3 L6,4.2 L4.5,5.4 Z" fill="#333"/></svg><svg class="a" style="left:34px;top:158.2px;" width="8" height="8" viewBox="0 0 8 8"><path d="M0.5,6.5 Q0.5,1 4,1 Q7.5,1 7.5,6.5 Z" stroke="#333" stroke-width="0.65" fill="none"/><path d="M2,6.5 L3,4 M4,6.5 V3.5 M6,6.5 L5,4" stroke="#333" stroke-width="0.4"/></svg><svg class="a" style="left:46px;top:158.2px;" width="8" height="8" viewBox="0 0 8 8"><rect x="1" y="2" width="6" height="4.5" rx="0.5" stroke="#333" stroke-width="0.65" fill="none"/><path d="M0.3,3 V5.5 M7.7,3 V5.5" stroke="#333" stroke-width="0.65" fill="none"/></svg><svg class="a" style="left:9.4px;top:167.67000000000002px;" width="8" height="8" viewBox="0 0 8 8"><path d="M1,1.5 L5,5.5" stroke="#333" stroke-width="0.9"/><path d="M0.5,3 Q0.5,0.5 3,0.5" stroke="#777" stroke-width="0.6" fill="none"/><rect x="4.5" y="1" width="3" height="3" fill="#b8860b"/></svg><svg class="a" style="left:9.5px;top:273.6px;" width="8" height="8" viewBox="0 0 8 8"><path d="M0.5,5 L2,3 L3,4 L4,1.5 L5,4 L6,3 L7.5,5" stroke="#333" stroke-width="0.65" fill="none"/></svg><svg class="a" style="left:21.9px;top:273.6px;" width="8" height="8" viewBox="0 0 8 8"><rect x="1" y="2.5" width="6" height="4.5" stroke="#333" stroke-width="0.65" fill="none"/><path d="M2,2.5 V1 M6,2.5 V1 M3,5 H5" stroke="#333" stroke-width="0.65" fill="none"/></svg><svg class="a" style="left:34px;top:273.6px;" width="8" height="8" viewBox="0 0 8 8"><rect x="0.5" y="1" width="7" height="2.5" stroke="#333" stroke-width="0.65" fill="none"/><rect x="3" y="4" width="3" height="3" fill="#333"/></svg><svg class="a" style="left:46.2px;top:273.6px;" width="8" height="8" viewBox="0 0 8 8"><rect x="0.5" y="1" width="7" height="2.5" stroke="#333" stroke-width="0.65" fill="none"/><rect x="4" y="4.5" width="2" height="2" fill="#333"/></svg><svg class="a" style="left:9.5px;top:283.20000000000005px;" width="8" height="8" viewBox="0 0 8 8"><rect x="0.5" y="1" width="7" height="2.5" stroke="#333" stroke-width="0.65" fill="none"/><path d="M4,3.5 V7 M2.5,7 H5.5" stroke="#333" stroke-width="0.65" fill="none"/></svg><svg class="a" style="left:21.9px;top:283.20000000000005px;" width="8" height="8" viewBox="0 0 8 8"><path d="M0.5,3 L6,1.5 L7.5,3 L2,4.5 Z M0.5,3 V6 L2,7.5 L7.5,6 V3" stroke="#333" stroke-width="0.65" fill="none"/></svg><svg class="a" style="left:34px;top:283.20000000000005px;" width="8" height="8" viewBox="0 0 8 8"><path d="M4,0.5 V7 M1,2 H7 M2,7 H6" stroke="#333" stroke-width="0.65" fill="none"/><path d="M6.5,4 V7" stroke="#333" stroke-width="0.65" fill="none"/></svg><svg class="a" style="left:46.2px;top:283.20000000000005px;" width="8" height="8" viewBox="0 0 8 8"><path d="M2.5,1 H5.5 V3 H7.5 V5.5 H5.5 V7.5 H2.5 V5.5 H0.5 V3 H2.5 Z" stroke="#333" stroke-width="0.65" fill="none"/></svg><svg class="a" style="left:9.5px;top:292.8px;" width="8" height="8" viewBox="0 0 8 8"><path d="M4,0.5 V5 M2.5,2.5 H5.5" stroke="#333" stroke-width="0.7"/><circle cx="4" cy="6" r="1.3" fill="#333"/></svg><svg class="a" style="left:21.9px;top:292.8px;" width="8" height="8" viewBox="0 0 8 8"><rect x="1.5" y="0.5" width="5" height="7" stroke="#333" stroke-width="0.65" fill="none"/><path d="M4,0.5 V7.5 M1.5,4 H6.5" stroke="#333" stroke-width="0.65" fill="none"/></svg><svg class="a" style="left:34px;top:292.8px;" width="8" height="8" viewBox="0 0 8 8"><path d="M4,1 L7,7 H1 Z" fill="#444"/></svg><svg class="a" style="left:46.2px;top:292.8px;" width="8" height="8" viewBox="0 0 8 8"><path d="M1.5,1 H6.5 L5,4 H3 Z" fill="#333"/><circle cx="4" cy="6" r="1.4" fill="#333"/></svg><svg class="a" style="left:9.5px;top:302.40000000000003px;" width="8" height="8" viewBox="0 0 8 8"><path d="M0.5,1 L4,4.5 L7.5,1 M4,4.5 V6" stroke="#333" stroke-width="0.6" fill="none"/><circle cx="4" cy="6.3" r="1.3" fill="#333"/></svg><svg class="a" style="left:21.9px;top:302.40000000000003px;" width="8" height="8" viewBox="0 0 8 8"><rect x="1" y="1" width="6" height="2.5" stroke="#333" stroke-width="0.65" fill="none"/><path d="M4,3.5 V6" stroke="#333" stroke-width="0.65" fill="none"/><circle cx="4" cy="6.3" r="1.3" fill="#333"/></svg><svg class="a" style="left:34px;top:302.40000000000003px;" width="8" height="8" viewBox="0 0 8 8"><rect x="0.5" y="1" width="7" height="2.5" stroke="#333" stroke-width="0.65" fill="none"/><circle cx="4" cy="6" r="1.3" fill="#333"/><path d="M1,6 H7" stroke="#333" stroke-width="0.65" fill="none"/></svg><svg class="a" style="left:9.4px;top:495.8px;" width="8" height="8" viewBox="0 0 8 8"><path d="M1,7 L2.5,1.5 H6 L7.5,7 Z" fill="#a8d8a8" stroke="#5a9a5a" stroke-width="0.5"/><path d="M3,2.5 L6,4.5 L3,6 Z" fill="#fff"/></svg><svg class="a" style="left:21.8px;top:495.8px;" width="8" height="8" viewBox="0 0 8 8"><path d="M4,0.8 Q6.5,4 6,5.5 A2,2 0 0 1 2,5.5 Q1.5,4 4,0.8 Z" fill="#5ab0e0" stroke="#2a7ab0" stroke-width="0.4"/></svg><svg class="a" style="left:34px;top:495.8px;" width="8" height="8" viewBox="0 0 8 8"><circle cx="4" cy="4" r="3.2" fill="#6aa0d8" stroke="#335" stroke-width="0.5"/><path d="M2,3 Q4,5 6,3" stroke="#fff" stroke-width="0.6" fill="none"/></svg><svg class="a" style="left:46px;top:495.8px;" width="8" height="8" viewBox="0 0 8 8"><rect x="1" y="1" width="6" height="6" fill="#ddd" stroke="#888" stroke-width="0.5"/><rect x="2.5" y="2.5" width="3" height="3" fill="#999"/></svg><svg class="a" style="left:9.4px;top:505.6px;" width="8" height="8" viewBox="0 0 8 8"><path d="M0.5,4 L4,1 L7.5,4 V7 H0.5 Z" fill="#b03030"/><rect x="2.5" y="4.5" width="3" height="2.5" fill="#555"/></svg><svg class="a" style="left:21.8px;top:505.6px;" width="8" height="8" viewBox="0 0 8 8"><rect x="0.5" y="1" width="6" height="4" fill="#2a4ad8"/><rect x="4" y="3.5" width="3.5" height="4" fill="#111"/><rect x="4.8" y="4.5" width="2" height="2" fill="#fff"/></svg><svg class="a" style="left:34px;top:505.6px;" width="8" height="8" viewBox="0 0 8 8"><path d="M0.5,5 L6,2 L7.5,3.5 L2,6.5 Z" fill="#7a9ad8" stroke="#334" stroke-width="0.5"/></svg><svg class="a" style="left:46px;top:505.6px;" width="8" height="8" viewBox="0 0 8 8"><path d="M1,7 L3,2 L5,5 L7,1" stroke="#b8860b" stroke-width="1.2" fill="none"/><path d="M5,7 L7.5,2" stroke="#333" stroke-width="0.5"/></svg><svg class="a" style="left:9.4px;top:515.4px;" width="8" height="8" viewBox="0 0 8 8"><rect x="0.5" y="1.5" width="7" height="5" fill="#999" stroke="#666" stroke-width="0.5"/><path d="M1,3 H7 M1,5 H7" stroke="#ccc" stroke-width="0.5"/></svg><svg class="a" style="left:21.8px;top:515.4px;" width="8" height="8" viewBox="0 0 8 8"><rect x="0.5" y="2" width="7" height="4.5" fill="#b03030"/><rect x="1.5" y="3.5" width="5" height="2" fill="#fff"/></svg><svg class="a" style="left:34px;top:515.4px;" width="8" height="8" viewBox="0 0 8 8"><path d="M0.5,5 Q2,2 4,3 L7.5,4 L7,6 H0.5 Z" fill="#e8c860" stroke="#777" stroke-width="0.4"/></svg><svg class="a" style="left:46px;top:515.4px;" width="8" height="8" viewBox="0 0 8 8"><rect x="2" y="0.5" width="4" height="7" fill="#eee" stroke="#333" stroke-width="0.6"/><rect x="3" y="1.5" width="2" height="5" fill="#222"/></svg><svg class="a" style="left:9.4px;top:525.2px;" width="8" height="8" viewBox="0 0 8 8"><path d="M0.5,3 H5 L7.5,1 V7 L5,5 H0.5 Z" fill="#c8a030" stroke="#555" stroke-width="0.4"/></svg><svg class="a" style="left:21.8px;top:525.2px;" width="8" height="8" viewBox="0 0 8 8"><rect x="2" y="0.5" width="4.5" height="7" fill="#aac" stroke="#557" stroke-width="0.5"/><path d="M3,6 L5.5,2" stroke="#fff" stroke-width="0.5"/></svg><svg class="a" style="left:34px;top:525.2px;" width="8" height="8" viewBox="0 0 8 8"><rect x="0.5" y="2" width="7" height="5" rx="1" fill="#ccc" stroke="#444" stroke-width="0.5"/><circle cx="4" cy="4.5" r="1.5" fill="#333"/></svg><svg class="a" style="left:46px;top:525.2px;" width="8" height="8" viewBox="0 0 8 8"><rect x="1" y="1" width="6" height="6.5" fill="#d8b890" stroke="#664" stroke-width="0.5"/><path d="M4,1 V7.5" stroke="#664" stroke-width="0.4"/></svg><svg class="a" style="left:9.4px;top:535.0px;" width="8" height="8" viewBox="0 0 8 8"><rect x="0.5" y="2.5" width="7" height="3.5" rx="0.5" fill="#d0a868" stroke="#665" stroke-width="0.4"/></svg><svg class="a" style="left:21.8px;top:535.0px;" width="8" height="8" viewBox="0 0 8 8"><path d="M0.5,1.5 H7.5 M0.5,6.5 H7.5 M1,1.5 L4,4 L7,1.5 M1,6.5 L4,4 L7,6.5" stroke="#333" stroke-width="0.6" fill="none"/></svg><svg class="a" style="left:34px;top:535.0px;" width="8" height="8" viewBox="0 0 8 8"><path d="M0.5,6.5 L2,3 H6 L7.5,6.5 Z" fill="#5a8ad0" stroke="#333" stroke-width="0.4"/><circle cx="4" cy="2.5" r="1.5" fill="#5a8ad0"/></svg><svg class="a" style="left:46px;top:535.0px;" width="8" height="8" viewBox="0 0 8 8"><path d="M0.5,3 H5 Q7.5,3 7.5,4.5 Q7.5,6 5,6 H0.5 Z" fill="#eee" stroke="#555" stroke-width="0.5"/></svg><svg class="a" style="left:9.4px;top:544.8px;" width="8" height="8" viewBox="0 0 8 8"><circle cx="3.5" cy="4" r="2.8" fill="#eee" stroke="#666" stroke-width="0.5"/><circle cx="5" cy="4.5" r="2" fill="none" stroke="#666" stroke-width="0.5"/></svg><div class="a" style="left:8.5px;top:514.8px;width:10px;height:9.5px;background:#d4d4d4;"></div><svg class="a" style="left:9.4px;top:515.5px;" width="8" height="8" viewBox="0 0 8 8"><rect x="0.5" y="1.5" width="7" height="5" fill="#999" stroke="#666" stroke-width="0.5"/><path d="M1,3 H7 M1,5 H7" stroke="#ccc" stroke-width="0.5"/></svg><div class="a" style="left:8px;top:266px;width:51px;height:6.3px;background:#e2e2e2;"></div><div class="a" style="left:8px;top:264.5px;width:51px;height:1.2px;background:#d0d0d0;"></div><svg class="a" style="left:9.5px;top:267px;" width="5" height="4.5" viewBox="0 0 5 4.5"><path d="M0.5,0.5 L4,4 M4,0.5 L0.5,4" stroke="#444" stroke-width="0.6"/></svg><div class="t" style="left:15.5px;top:268.02px;font-size:4.5px;color:#333;font-weight:normal;">Tool Sets</div><svg class="a" style="left:52px;top:267.5px;" width="4" height="3.5" viewBox="0 0 4 3.5"><path d="M0.5,0.5 H3.5 M0.5,1.7 H3.5 M0.5,2.9 H3.5" stroke="#777" stroke-width="0.6"/></svg><div class="a" style="left:7.5px;top:552.5px;width:572.5px;height:8.5px;background:#ececec;border-radius:0 0 5px 5px"></div><div class="t" style="left:9px;top:555.72px;font-size:4.5px;color:#444;font-weight:normal;">Selection Tool</div><div class="t" style="left:41.5px;top:555.72px;font-size:4.5px;color:#222;font-weight:bold;">X</div><div class="t" style="left:48px;top:555.72px;font-size:4.5px;color:#444;font-weight:normal;">Rectangular Marquee Mode</div><div class="t" style="left:420px;top:555.29px;font-size:4.2px;color:#444;font-weight:normal;">X: 62'0"</div><div class="t" style="left:473px;top:555.29px;font-size:4.2px;color:#444;font-weight:normal;">Y: 29'1"</div><div class="t" style="left:525.5px;top:555.29px;font-size:4.2px;color:#444;font-weight:normal;">Z: 0"</div><div class="a" style="left:59px;top:56px;width:2px;height:496.5px;background:#c4c4c4;"></div><div class="a" style="left:61px;top:56px;width:407.5px;height:9.5px;background:#c3c3c3;"></div><div class="a" style="left:62px;top:57px;width:77.5px;height:8.5px;background:#ececec;border-radius:1.5px 1.5px 0 0"></div><svg class="a" style="left:64px;top:59px;" width="4" height="4" viewBox="0 0 4 4"><path d="M0.5,0.5 L3.5,3.5 M3.5,0.5 L0.5,3.5" stroke="#444" stroke-width="0.6"/></svg><div class="t" style="left:69px;top:59.80px;font-size:4.9px;color:#222;font-weight:normal;">Curtain Move...nt Example.vwx</div><div class="t" style="left:142.5px;top:59.55px;font-size:5px;color:#444;font-weight:normal;">+</div><div class="a" style="left:470.5px;top:56px;width:109.5px;height:284px;background:#ececec;"></div><div class="a" style="left:470.5px;top:56px;width:109.5px;height:6.3px;background:#e2e2e2;"></div><svg class="a" style="left:472.0px;top:57px;" width="5" height="4.5" viewBox="0 0 5 4.5"><path d="M0.5,0.5 L4,4 M4,0.5 L0.5,4" stroke="#444" stroke-width="0.6"/></svg><div class="t" style="left:478.0px;top:58.12px;font-size:4.5px;color:#333;font-weight:normal;">Object Info - Data</div><svg class="a" style="left:568px;top:57.5px;" width="4" height="3.5" viewBox="0 0 4 3.5"><path d="M0.5,0.5 H3.5 M0.5,1.7 H3.5 M0.5,2.9 H3.5" stroke="#777" stroke-width="0.6"/></svg><div class="t" style="left:574.5px;top:58.12px;font-size:4.5px;color:#555;font-weight:normal;">?</div><div class="a" style="left:470.5px;top:62.5px;width:109.5px;height:10.5px;background:#c6c6c6;"></div><div class="a" style="left:471.5px;top:63px;width:26px;height:10px;background:#d2d2d2;"></div><div class="a" style="left:498.5px;top:62.5px;width:27px;height:10.5px;background:#ececec;border-radius:1px 1px 0 0"></div><div class="a" style="left:526px;top:63px;width:26px;height:10px;background:#d2d2d2;"></div><div class="a" style="left:552.5px;top:63.5px;width:0.5px;height:8.5px;background:#999;"></div><svg class="a" style="left:473.5px;top:64.5px;" width="7" height="6" viewBox="0 0 7 6"><rect x="0.5" y="1.5" width="4" height="3.5" rx="1" fill="none" stroke="#444" stroke-width="0.6"/><rect x="2.5" y="0.5" width="4" height="3.5" rx="1" fill="none" stroke="#444" stroke-width="0.6"/></svg><div class="t" style="left:482.5px;top:66.83px;font-size:4.5px;color:#333;font-weight:normal;">Shape</div><svg class="a" style="left:500.5px;top:64.5px;" width="8" height="6" viewBox="0 0 8 6"><rect x="0.5" y="0.5" width="6.5" height="5" rx="0.8" fill="none" stroke="#333" stroke-width="0.6"/><path d="M2,3 H5.5" stroke="#333" stroke-width="0.5"/></svg><div class="t" style="left:509.5px;top:66.83px;font-size:4.5px;color:#333;font-weight:normal;">Data</div><svg class="a" style="left:528px;top:64px;" width="7" height="7" viewBox="0 0 7 7"><path d="M0.8,1.5 Q3.5,0 6.2,1.5 V4 Q3.5,7 0.8,4 Z" fill="none" stroke="#333" stroke-width="0.7"/></svg><div class="t" style="left:536px;top:66.83px;font-size:4.5px;color:#333;font-weight:normal;">Render</div><div class="t" style="left:472px;top:77.12px;font-size:4.5px;color:#222;font-weight:bold;">Document Record Format Defaults</div><div class="a" style="left:470.5px;top:83.3px;width:109.5px;height:0.5px;background:#d8d8d8;"></div><div class="t" style="left:472px;top:87.12px;font-size:4.5px;color:#333;font-weight:normal;">Data Sheet:</div><div class="a" style="left:496px;top:85px;width:82.5px;height:6.5px;background:#f6f6f6;border-radius:1px"></div><div class="t" style="left:499px;top:87.12px;font-size:4.5px;color:#c4c4c4;font-weight:normal;">&lt;Default Settings&gt;</div><svg class="a" style="left:574px;top:85.5px;" width="3" height="5.5" viewBox="0 0 3 5.5"><path d="M0.5,2 L1.5,1 L2.5,2 M0.5,3.5 L1.5,4.5 L2.5,3.5" fill="none" stroke="#aaa" stroke-width="0.4"/></svg><div class="a" style="left:471.0px;top:92.5px;width:108.5px;height:78.5px;background:#ffffff;"></div><div class="t" style="left:476.5px;top:101.03px;font-size:4.5px;color:#666;font-weight:normal;">Lens Record Format</div><div class="a" style="left:471.0px;top:93px;width:108.5px;height:9.2px;background:#f7f7f7;"></div><div class="t" style="left:477px;top:97.12px;font-size:4.5px;color:#222;font-weight:normal;">Record Formats:</div><div class="t" style="left:476.5px;top:107.53px;font-size:4.5px;color:#222;font-weight:normal;">Light Info Record</div><div class="t" style="left:476.5px;top:114.80px;font-size:4.5px;color:#222;font-weight:normal;">Parts</div><div class="t" style="left:476.5px;top:122.07px;font-size:4.5px;color:#222;font-weight:normal;">Rigging Object Info</div><div class="t" style="left:476.5px;top:129.34px;font-size:4.5px;color:#222;font-weight:normal;">Stand Record Format</div><div class="t" style="left:476.5px;top:136.61px;font-size:4.5px;color:#222;font-weight:normal;">Truss Chord Info Record</div><div class="t" style="left:476.5px;top:143.88px;font-size:4.5px;color:#222;font-weight:normal;">Truss Record</div><div class="t" style="left:476.5px;top:151.15px;font-size:4.5px;color:#222;font-weight:normal;">Video Acc</div><div class="t" style="left:476.5px;top:158.42px;font-size:4.5px;color:#222;font-weight:normal;">Video LED</div><div class="a" style="left:471.0px;top:163.6px;width:108.5px;height:7px;background:#dadada;"></div><div class="t" style="left:476.5px;top:165.83px;font-size:4.5px;color:#222;font-weight:normal;">Xform_DMX</div><div class="a" style="left:471.0px;top:171.0px;width:108.5px;height:7px;background:#f0f0f0;border-top:0.5px solid #dcdcdc"></div><div class="t" style="left:475px;width:100px;text-align:center;top:173.23px;font-size:4.5px;color:#c0c0c0;font-weight:normal;">Attach Record</div><div class="a" style="left:471.0px;top:178.3px;width:108.5px;height:7px;background:#f0f0f0;border-top:0.5px solid #dcdcdc"></div><div class="t" style="left:475px;width:100px;text-align:center;top:180.53px;font-size:4.5px;color:#c0c0c0;font-weight:normal;">Attach IFC...</div><div class="a" style="left:471.0px;top:185.6px;width:108.5px;height:7px;background:#f0f0f0;border-top:0.5px solid #dcdcdc"></div><div class="t" style="left:475px;width:100px;text-align:center;top:187.83px;font-size:4.5px;color:#c0c0c0;font-weight:normal;">Assign Classifications...</div><div class="a" style="left:471.0px;top:192.9px;width:108.5px;height:7px;background:#f0f0f0;border-top:0.5px solid #dcdcdc"></div><div class="t" style="left:475px;width:100px;text-align:center;top:195.13px;font-size:4.5px;color:#c0c0c0;font-weight:normal;">Detach...</div><svg class="a" style="left:523.5px;top:200px;" width="3" height="2" viewBox="0 0 3 2"><path d="M0.3,0.3 L1.5,1.5 L2.7,0.3" fill="none" stroke="#aaa" stroke-width="0.4"/></svg><div class="a" style="left:470.5px;top:203px;width:109.5px;height:0.5px;background:#d8d8d8;"></div><div class="t" style="left:472.5px;top:207.63px;font-size:4.5px;color:#333;font-weight:normal;">Universe:</div><div class="a" style="left:509px;top:205.5px;width:69.5px;height:6.6px;background:#fff;border-radius:1px"></div><div class="t" style="left:510.5px;top:207.63px;font-size:4.5px;color:#333;font-weight:normal;">0</div><div class="t" style="left:472.5px;top:216.43px;font-size:4.5px;color:#333;font-weight:normal;">Channel:</div><div class="a" style="left:509px;top:214.29999999999998px;width:69.5px;height:6.6px;background:#fff;border-radius:1px"></div><div class="t" style="left:510.5px;top:216.43px;font-size:4.5px;color:#333;font-weight:normal;">0</div><div class="t" style="left:472.5px;top:225.03px;font-size:4.5px;color:#333;font-weight:normal;">Delta X:</div><div class="a" style="left:509px;top:222.89999999999998px;width:69.5px;height:6.6px;background:#fff;border-radius:1px"></div><div class="t" style="left:510.5px;top:225.03px;font-size:4.5px;color:#333;font-weight:normal;">0"</div><div class="t" style="left:472.5px;top:233.83px;font-size:4.5px;color:#333;font-weight:normal;">Delta Y:</div><div class="a" style="left:509px;top:231.7px;width:69.5px;height:6.6px;background:#fff;border-radius:1px"></div><div class="t" style="left:510.5px;top:233.83px;font-size:4.5px;color:#333;font-weight:normal;">0"</div><div class="t" style="left:472.5px;top:242.43px;font-size:4.5px;color:#333;font-weight:normal;">Delta Z:</div><div class="a" style="left:509px;top:240.29999999999998px;width:69.5px;height:6.6px;background:#fff;border-radius:1px"></div><div class="t" style="left:510.5px;top:242.43px;font-size:4.5px;color:#333;font-weight:normal;">0"</div><div class="t" style="left:472.5px;top:251.23px;font-size:4.5px;color:#333;font-weight:normal;">Rotation Axis:</div><div class="a" style="left:509px;top:249.1px;width:69.5px;height:6.6px;background:#fff;border-radius:1px"></div><div class="t" style="left:510.5px;top:251.23px;font-size:4.5px;color:#333;font-weight:normal;">Z</div><div class="t" style="left:472.5px;top:261.12px;font-size:4.5px;color:#333;font-weight:normal;">Rotation Delta:</div><div class="a" style="left:509px;top:259.0px;width:69.5px;height:6.6px;background:#fff;border-radius:1px"></div><div class="t" style="left:510.5px;top:261.12px;font-size:4.5px;color:#333;font-weight:normal;">360°</div><div class="t" style="left:472.5px;top:269.82px;font-size:4.5px;color:#333;font-weight:normal;">Rotation RPM:</div><div class="a" style="left:509px;top:267.7px;width:69.5px;height:6.6px;background:#fff;border-radius:1px"></div><div class="t" style="left:510.5px;top:269.82px;font-size:4.5px;color:#333;font-weight:normal;">120</div><div class="t" style="left:472.5px;top:278.62px;font-size:4.5px;color:#333;font-weight:normal;">Scale X:</div><div class="a" style="left:509px;top:276.5px;width:69.5px;height:6.6px;background:#fff;border-radius:1px"></div><div class="t" style="left:510.5px;top:278.62px;font-size:4.5px;color:#333;font-weight:normal;">300.00%</div><div class="t" style="left:472.5px;top:287.22px;font-size:4.5px;color:#333;font-weight:normal;">Scale Y:</div><div class="a" style="left:509px;top:285.09999999999997px;width:69.5px;height:6.6px;background:#fff;border-radius:1px"></div><div class="t" style="left:510.5px;top:287.22px;font-size:4.5px;color:#333;font-weight:normal;">300.00%</div><div class="t" style="left:472.5px;top:295.82px;font-size:4.5px;color:#333;font-weight:normal;">Scale Z:</div><div class="a" style="left:509px;top:293.7px;width:69.5px;height:6.6px;background:#fff;border-radius:1px"></div><div class="t" style="left:510.5px;top:295.82px;font-size:4.5px;color:#333;font-weight:normal;">300.00%</div><div class="t" style="left:472.5px;top:304.52px;font-size:4.5px;color:#333;font-weight:normal;">Rotation Point X:</div><div class="a" style="left:509px;top:302.4px;width:69.5px;height:6.6px;background:#fff;border-radius:1px"></div><div class="t" style="left:510.5px;top:304.52px;font-size:4.5px;color:#333;font-weight:normal;">-5'0"</div><div class="t" style="left:472.5px;top:313.22px;font-size:4.5px;color:#333;font-weight:normal;">Rotation Point Y:</div><div class="a" style="left:509px;top:311.09999999999997px;width:69.5px;height:6.6px;background:#fff;border-radius:1px"></div><div class="t" style="left:510.5px;top:313.22px;font-size:4.5px;color:#333;font-weight:normal;">0"</div><div class="t" style="left:472.5px;top:321.82px;font-size:4.5px;color:#333;font-weight:normal;">Rotation Point Z:</div><div class="a" style="left:509px;top:319.7px;width:69.5px;height:6.6px;background:#fff;border-radius:1px"></div><div class="t" style="left:510.5px;top:321.82px;font-size:4.5px;color:#333;font-weight:normal;">0"</div><div class="a" style="left:572.8px;top:249.3px;width:5.2px;height:5.2px;background:#1e7cf5;border-radius:1.2px"></div><svg class="a" style="left:573.2px;top:249.6px;" width="4.4" height="4.6" viewBox="0 0 4.4 4.6"><path d="M1.2,1.8 L2.2,2.8 L3.2,1.8" fill="none" stroke="#fff" stroke-width="0.5"/></svg><div class="a" style="left:470.5px;top:328.5px;width:109.5px;height:0.5px;background:#e0e0e0;"></div><div class="t" style="left:472px;top:332.32px;font-size:4.5px;color:#c4c4c4;font-weight:normal;">Name:</div><div class="a" style="left:485px;top:330.5px;width:93px;height:6px;background:#f3f3f3;"></div><div class="a" style="left:470.5px;top:340px;width:109.5px;height:212.5px;background:#ececec;"></div><div class="a" style="left:470.5px;top:340.3px;width:109.5px;height:6.3px;background:#e2e2e2;"></div><svg class="a" style="left:472.0px;top:341.2px;" width="5" height="4.5" viewBox="0 0 5 4.5"><path d="M0.5,0.5 L4,4 M4,0.5 L0.5,4" stroke="#444" stroke-width="0.6"/></svg><div class="t" style="left:478.0px;top:342.32px;font-size:4.5px;color:#333;font-weight:normal;">Navigation - Design Layers</div><svg class="a" style="left:568px;top:341.8px;" width="4" height="3.5" viewBox="0 0 4 3.5"><path d="M0.5,0.5 H3.5 M0.5,1.7 H3.5 M0.5,2.9 H3.5" stroke="#777" stroke-width="0.6"/></svg><div class="t" style="left:574.5px;top:342.32px;font-size:4.5px;color:#555;font-weight:normal;">?</div><div class="a" style="left:470.5px;top:346.8px;width:109.5px;height:10px;background:#c6c6c6;"></div><div class="a" style="left:482.3px;top:347px;width:10.3px;height:9.8px;background:#ececec;"></div><svg class="a" style="left:473.5px;top:348.6px;" width="7" height="7" viewBox="0 0 7 7"><circle cx="1.5" cy="3.5" r="1" fill="#666"/><circle cx="4" cy="1.5" r="1" fill="#666"/><circle cx="4" cy="5.5" r="1" fill="#666"/><circle cx="6.2" cy="3.5" r="1" fill="#666"/><path d="M1.5,3.5 L4,1.5 L6.2,3.5 L4,5.5 Z" fill="none" stroke="#666" stroke-width="0.4"/></svg><svg class="a" style="left:483.9px;top:348.6px;" width="7" height="7" viewBox="0 0 7 7"><path d="M3.5,0.5 L6.5,2 V5 L3.5,6.5 L0.5,5 V2 Z" fill="#555"/><path d="M0.5,2 L3.5,3.3 L6.5,2" stroke="#999" stroke-width="0.4" fill="none"/></svg><svg class="a" style="left:493.9px;top:348.6px;" width="7" height="7" viewBox="0 0 7 7"><rect x="0.6" y="0.8" width="5.8" height="5.4" fill="#777"/><rect x="1.8" y="2" width="2.5" height="1.8" fill="#ccc"/></svg><svg class="a" style="left:504.1px;top:348.6px;" width="7" height="7" viewBox="0 0 7 7"><path d="M0.8,6 V2.5 L3.5,1 L6.2,2.5 V6 Z M0.8,2.5 L6.2,6 M6.2,2.5 L0.8,6" fill="none" stroke="#666" stroke-width="0.6"/></svg><svg class="a" style="left:514.5px;top:348.6px;" width="7" height="7" viewBox="0 0 7 7"><rect x="0.8" y="0.5" width="4" height="6" fill="#f4f4f4" stroke="#777" stroke-width="0.5"/><ellipse cx="5" cy="5" rx="2" ry="1.3" fill="#333"/></svg><svg class="a" style="left:523.5px;top:348.6px;" width="7" height="7" viewBox="0 0 7 7"><path d="M1,3 Q1,0.8 3.5,0.8 Q6,0.8 6,3 M6,4 Q6,6.2 3.5,6.2 Q1,6.2 1,4" fill="none" stroke="#666" stroke-width="0.7"/></svg><div class="t" style="left:472px;top:360.12px;font-size:4.5px;color:#333;font-weight:normal;">Layer Options:</div><div class="a" style="left:504.5px;top:358px;width:74px;height:6.6px;background:#fff;border-radius:1px"></div><div class="t" style="left:506.5px;top:360.12px;font-size:4.5px;color:#333;font-weight:normal;">Show/Snap/Modify Others</div><div class="a" style="left:573px;top:358.7px;width:5.2px;height:5.2px;background:#1e7cf5;border-radius:1.2px"></div><div class="t" style="left:472px;top:367.52px;font-size:4.5px;color:#333;font-weight:normal;">Filter:</div><div class="a" style="left:504.5px;top:365.4px;width:74px;height:6.6px;background:#fff;border-radius:1px"></div><div class="t" style="left:506.5px;top:367.52px;font-size:4.5px;color:#333;font-weight:normal;">&lt;All Layers&gt;</div><div class="a" style="left:573px;top:366.1px;width:5.2px;height:5.2px;background:#1e7cf5;border-radius:1.2px"></div><div class="a" style="left:471.5px;top:372.8px;width:107.5px;height:7px;background:#fff;border-radius:1.5px"></div><div class="a" style="left:473.5px;top:374.2px;width:3.2px;height:3.2px;border-radius:50%;border:0.6px solid #777"></div><div class="a" style="left:476.2px;top:377px;width:1.3px;height:0.6px;background:#777;transform:rotate(45deg)"></div><div class="t" style="left:480px;top:375.32px;font-size:4.5px;color:#c8c8c8;font-weight:normal;">Search</div><div class="a" style="left:470.5px;top:381px;width:109.5px;height:171.5px;background:#ffffff;"></div><div class="a" style="left:470.5px;top:381px;width:109.5px;height:9px;background:#fff;"></div><div class="t" style="left:472px;top:384.62px;font-size:4.5px;color:#444;font-weight:normal;">Visibi...</div><div class="a" style="left:476.2px;top:389px;width:0.5px;height:163px;background:#e4e4e4;"></div><div class="a" style="left:482.8px;top:389px;width:0.5px;height:163px;background:#e4e4e4;"></div><div class="a" style="left:488.3px;top:382px;width:0.5px;height:170.5px;background:#e4e4e4;"></div><div class="a" style="left:498.6px;top:382px;width:0.5px;height:6px;background:#e0e0e0;"></div><div class="a" style="left:470.5px;top:388.6px;width:109.5px;height:0.4px;background:#ececec;"></div><div class="t" style="left:500px;top:384.62px;font-size:4.5px;color:#444;font-weight:normal;">Design Layer Name</div><div class="t" style="left:552.5px;top:384.62px;font-size:4.5px;color:#444;font-weight:normal;">#</div><div class="a" style="left:555.5px;top:382px;width:0.5px;height:8px;background:#e6e6e6;"></div><div class="t" style="left:562px;top:384.62px;font-size:4.5px;color:#444;font-weight:normal;">Story</div><div class="a" style="left:470.5px;top:396.7px;width:109.5px;height:6px;background:#bddcf7;"></div><div class="t" style="left:500px;top:392.22px;font-size:4.5px;color:#222;font-weight:normal;">Light Plot</div><div class="t" style="left:552.3px;top:392.22px;font-size:4.5px;color:#333;font-weight:normal;">1</div><svg class="a" style="left:477px;top:390.9px;" width="5" height="5" viewBox="0 0 5 5"><path d="M0.5,0.5 L4.5,4.5 M4.5,0.5 L0.5,4.5" stroke="#333" stroke-width="0.6"/></svg><div class="t" style="left:500px;top:398.12px;font-size:4.5px;color:#222;font-weight:bold;">Generic Solid</div><div class="t" style="left:552.3px;top:398.12px;font-size:4.5px;color:#333;font-weight:normal;">2</div><svg class="a" style="left:471.2px;top:397.29999999999995px;" width="6" height="4" viewBox="0 0 6 4"><path d="M0.5,2 Q3,-0.5 5.5,2 Q3,4.5 0.5,2 Z" fill="#777" stroke="#444" stroke-width="0.5"/><circle cx="3" cy="2" r="1" fill="#222"/></svg><div class="t" style="left:500px;top:404.02px;font-size:4.5px;color:#222;font-weight:normal;">Soft Goods</div><div class="t" style="left:552.3px;top:404.02px;font-size:4.5px;color:#333;font-weight:normal;">3</div><svg class="a" style="left:477px;top:402.7px;" width="5" height="5" viewBox="0 0 5 5"><path d="M0.5,0.5 L4.5,4.5 M4.5,0.5 L0.5,4.5" stroke="#333" stroke-width="0.6"/></svg><div class="t" style="left:500px;top:409.92px;font-size:4.5px;color:#222;font-weight:normal;">Scenery</div><div class="t" style="left:552.3px;top:409.92px;font-size:4.5px;color:#333;font-weight:normal;">4</div><svg class="a" style="left:477px;top:408.59999999999997px;" width="5" height="5" viewBox="0 0 5 5"><path d="M0.5,0.5 L4.5,4.5 M4.5,0.5 L0.5,4.5" stroke="#333" stroke-width="0.6"/></svg><div class="t" style="left:500px;top:415.82px;font-size:4.5px;color:#222;font-weight:normal;">Theatre FloorPlan</div><div class="t" style="left:552.3px;top:415.82px;font-size:4.5px;color:#333;font-weight:normal;">5</div><svg class="a" style="left:471.2px;top:415.0px;" width="6" height="4" viewBox="0 0 6 4"><path d="M0.5,2 Q3,-0.5 5.5,2 Q3,4.5 0.5,2 Z" fill="#777" stroke="#444" stroke-width="0.5"/><circle cx="3" cy="2" r="1" fill="#222"/></svg><svg class="a" style="left:489px;top:396.5px;" width="6" height="5" viewBox="0 0 6 5"><path d="M0.5,2.5 L2,4 L5.5,0.5" fill="none" stroke="#222" stroke-width="0.7"/></svg><div class="a" style="left:61px;top:65.5px;width:407.5px;height:487px;background:linear-gradient(180deg,#a39f9c 0%,#a9a5a2 25%,#bbb7b4 50%,#d0ccc9 75%,#ddd9d6 100%);"></div><svg class="a" style="left:0;top:0" width="1000" height="564" viewBox="0 0 1000 564"><defs><clipPath id="vc"><rect x="61" y="65.5" width="407.5" height="487"/></clipPath></defs><g clip-path="url(#vc)"><defs><linearGradient id="sfL" x1="0" y1="0" x2="0" y2="1"><stop offset="0" stop-color="#f2f1f0"/><stop offset="1" stop-color="#dad7d4"/></linearGradient><linearGradient id="sfR" x1="0" y1="0" x2="0" y2="1"><stop offset="0" stop-color="#ebe9e7"/><stop offset="1" stop-color="#d6d3d0"/></linearGradient><radialGradient id="shd" cx="0.5" cy="0.5" r="0.5"><stop offset="0" stop-color="#000" stop-opacity="0.13"/><stop offset="1" stop-color="#000" stop-opacity="0"/></radialGradient></defs><polygon points="27.70,293.40 241.50,513.60 241.50,520.60 27.70,300.40" fill="url(#sfL)"/><polygon points="241.50,513.60 475.80,291.10 475.80,298.10 241.50,520.60" fill="url(#sfR)"/><polygon points="252.30,208.30 475.80,291.10 241.50,513.60 27.70,293.40" fill="#ffffff"/><filter id="bl" x="-20%" y="-50%" width="140%" height="200%"><feGaussianBlur stdDeviation="1.6"/></filter><ellipse cx="172" cy="317" rx="122" ry="19" transform="rotate(-18 172 317)" fill="#000" opacity="0.05" filter="url(#bl)"/><path d="M252.30,208.30L27.70,293.40M260.05,211.17L33.65,299.53M33.65,299.53v7M268.05,214.13L39.89,305.95M39.89,305.95v7M276.32,217.20L46.43,312.69M46.43,312.69v7M284.86,220.36L53.30,319.77M53.30,319.77v7M293.71,223.64L60.53,327.21M60.53,327.21v7M302.86,227.03L68.13,335.04M68.13,335.04v7M312.35,230.54L76.15,343.30M76.15,343.30v7M322.17,234.19L84.61,352.02M84.61,352.02v7M332.36,237.96L93.56,361.24M93.56,361.24v7M342.94,241.88L103.04,371.00M103.04,371.00v7M353.92,245.95L113.10,381.35M113.10,381.35v7M365.34,250.18L123.78,392.36M123.78,392.36v7M377.21,254.58L135.16,404.08M135.16,404.08v7M389.57,259.15L147.30,416.58M147.30,416.58v7M402.44,263.92L160.28,429.95M160.28,429.95v7M415.86,268.89L174.20,444.28M174.20,444.28v7M429.87,274.08L189.14,459.68M189.14,459.68v7M444.50,279.50L205.25,476.26M205.25,476.26v7M459.79,285.17L222.64,494.18M222.64,494.18v7M475.80,291.10L241.50,513.60M252.30,208.30L475.80,291.10M244.35,211.31L469.14,297.43M469.14,297.43v7M236.15,214.42L462.17,304.05M462.17,304.05v7M227.70,217.62L454.86,310.98M454.86,310.98v7M218.97,220.93L447.21,318.25M447.21,318.25v7M209.95,224.35L439.16,325.89M439.16,325.89v7M200.63,227.88L430.71,333.92M430.71,333.92v7M191.00,231.53L421.81,342.37M421.81,342.37v7M181.04,235.30L412.44,351.27M412.44,351.27v7M170.72,239.21L402.54,360.67M402.54,360.67v7M160.04,243.26L392.07,370.61M392.07,370.61v7M148.97,247.45L381.00,381.13M381.00,381.13v7M137.49,251.80L369.25,392.28M369.25,392.28v7M125.58,256.31L356.77,404.14M356.77,404.14v7M113.21,261.00L343.48,416.75M343.48,416.75v7M100.35,265.87L329.31,430.21M329.31,430.21v7M86.98,270.94L314.17,444.59M314.17,444.59v7M73.07,276.21L297.95,460.00M297.95,460.00v7M58.58,281.70L280.52,476.54M280.52,476.54v7M43.47,287.43L261.76,494.36M261.76,494.36v7M27.70,293.40L241.50,513.60" stroke="#444444" stroke-width="0.7" fill="none"/><path d="M27.7,300.4L241.5,520.6L475.8,298.1M241.5,513.6v7" stroke="#777" stroke-width="0.5" fill="none"/><path d="M248.7,66 L248.9,190" stroke="#8a84d8" stroke-width="0.5"/><path d="M61,391.6 L400.5,211" stroke="#e07070" stroke-width="0.35" stroke-opacity="0.8" fill="none"/><path d="M251.5,293.1 L283,311" stroke="#8fd08f" stroke-width="0.35" fill="none"/><circle cx="400.5" cy="211" r="1.3" fill="#e63a2a"/><path d="M140,227 L110,215" stroke="#7fb87f" stroke-width="0.35"/><path d="M80,360 L200,300" stroke="#c9a8a8" stroke-width="0.3" stroke-opacity="0.5"/><polygon points="185,293.7 195.4,290.4 203.1,284.3 249.3,299.7 237.2,312.9 217.4,306.9 213,305.2 202,298 189.9,295.9" fill="#030303"/><polygon points="201.5,147.4 140.9,227.6 190.6,270.6 239.4,304.2 289.2,233.6 282.4,223.9 259,211.2" fill="#098f09"/><polygon points="229.5,270 263.6,270 239.4,304.1 216.3,287.6" fill="#10a610"/><polygon points="140.9,227.6 190.6,270.6 239.4,304.2 236,302 192,274 145,231" fill="#078007"/><polygon points="201.5,147.4 207.7,150.3 145.6,230.4 140.3,227.8" fill="#13b213"/><polygon points="259,211.2 282.4,223.9 289.2,233.6 279,233 258.5,221" fill="#0fa60f"/><polygon points="289.2,233.6 290.5,237 240.8,307 239.4,304.2" fill="#077507"/><path d="M177.70,189.30C176.38,192.18 171.78,200.65 169.80,206.60C167.82,212.55 166.10,219.10 165.80,225.00C165.50,230.90 165.97,236.50 168.00,242.00C170.03,247.50 173.50,253.33 178.00,258.00C182.50,262.67 189.17,267.25 195.00,270.00C200.83,272.75 207.00,274.17 213.00,274.50C219.00,274.83 225.67,273.83 231.00,272.00C236.33,270.17 241.17,267.17 245.00,263.50C248.83,259.83 251.83,255.08 254.00,250.00C256.17,244.92 257.42,239.33 258.00,233.00C258.58,226.67 258.40,218.35 257.50,212.00C256.60,205.65 253.42,197.75 252.60,194.90 L249.4,190.6 L230.2,184.3 L233.4,189.6 L233.40,189.60C235.17,192.17 241.65,199.93 244.00,205.00C246.35,210.07 247.08,214.17 247.50,220.00C247.92,225.83 247.75,234.42 246.50,240.00C245.25,245.58 243.08,249.92 240.00,253.50C236.92,257.08 232.33,259.92 228.00,261.50C223.67,263.08 218.50,263.50 214.00,263.00C209.50,262.50 204.67,261.00 201.00,258.50C197.33,256.00 193.92,252.42 192.00,248.00C190.08,243.58 189.37,237.42 189.50,232.00C189.63,226.58 191.22,220.62 192.80,215.50C194.38,210.38 197.97,203.67 199.00,201.30 L195.5,197.3 Z" fill="#0c9c0c"/><path d="M177.70,189.30C176.38,192.18 171.78,200.65 169.80,206.60C167.82,212.55 166.10,219.10 165.80,225.00C165.50,230.90 165.97,236.50 168.00,242.00C170.03,247.50 173.50,253.33 178.00,258.00C182.50,262.67 189.17,267.25 195.00,270.00C200.83,272.75 210.00,273.75 213.00,274.50 L229.00,265.50C226.17,265.83 217.33,268.25 212.00,267.50C206.67,266.75 201.17,264.42 197.00,261.00C192.83,257.58 189.03,252.17 187.00,247.00C184.97,241.83 184.42,236.28 184.80,230.00C185.18,223.72 187.52,214.75 189.30,209.30C191.08,203.85 194.47,199.30 195.50,197.30 Z" fill="#10ad10"/><path d="M199.00,201.30C197.97,203.67 194.38,210.38 192.80,215.50C191.22,220.62 189.63,226.58 189.50,232.00C189.37,237.42 190.08,243.58 192.00,248.00C193.92,252.42 197.33,256.00 201.00,258.50C204.67,261.00 209.50,262.50 214.00,263.00C218.50,263.50 223.67,263.08 228.00,261.50C232.33,259.92 236.92,257.08 240.00,253.50C243.08,249.92 245.25,245.58 246.50,240.00C247.75,234.42 247.92,225.83 247.50,220.00C247.08,214.17 246.35,210.07 244.00,205.00C241.65,199.93 235.17,192.17 233.40,189.60 Q216,180 199,201.3 Z" fill="#088f08"/><polygon points="194,210 215,250 226,262 214,263 201,258.5 192,248 189.5,232" fill="#067c06"/><polygon points="215,250 236,214 244,205 247.5,220 246.5,240 240,253.5 228,261.5" fill="#0b950b"/><polygon points="199,201.3 207,196 236,214 215,250" fill="#078507" opacity="0.6"/><path d="M190.00,252.00C191.83,253.67 197.00,259.67 201.00,262.00C205.00,264.33 209.33,265.63 214.00,266.00C218.67,266.37 224.33,265.95 229.00,264.20C233.67,262.45 238.83,258.53 242.00,255.50C245.17,252.47 247.00,247.58 248.00,246.00" fill="none" stroke="#13ba13" stroke-width="3.4"/><path d="M233.40,189.60C235.17,192.17 241.65,199.93 244.00,205.00C246.35,210.07 247.08,214.17 247.50,220.00C247.92,225.83 246.67,236.67 246.50,240.00" fill="none" stroke="#11af11" stroke-width="1.2"/><polygon points="177.7,189.3 195.5,197.3 199,201.3 193,199.5" fill="#14b814"/><polygon points="230.2,184.3 249.4,190.6 252.6,194.9 233.4,189.6" fill="#18be18"/><circle cx="223.7" cy="277.5" r="1.65" fill="#e3402a"/><circle cx="235.6" cy="284.3" r="1.65" fill="#2a3ae0"/><circle cx="233.6" cy="302.7" r="1.65" fill="#2a3ae0"/><circle cx="226.2" cy="306.9" r="1.65" fill="#26d02a"/><circle cx="268.6" cy="284.3" r="1.65" fill="#2a3ae0"/><circle cx="274.8" cy="280.7" r="1.65" fill="#26d02a"/><circle cx="268.6" cy="302.7" r="1.65" fill="#2a3ae0"/><circle cx="283.2" cy="310.9" r="1.65" fill="#e3402a"/><circle cx="252" cy="320" r="1.65" fill="#26d02a"/><circle cx="252.4" cy="327.2" r="1.65" fill="#e3402a"/><circle cx="250.4" cy="254.5" r="1.65" fill="#e3402a"/><circle cx="251" cy="263.6" r="1.65" fill="#26d02a"/><rect x="250" y="291.6" width="3" height="3" transform="rotate(45 251.5 293.1)" fill="#2a9ad0"/><path d="M311.2,337.4 L336.7,319.7" stroke="#f02a2a" stroke-width="1.1"/><path d="M308.4,317.6 L343.8,337.4" stroke="#55e49a" stroke-width="1.1"/><path d="M328.2,309 L324.7,333.9" stroke="#17a7e0" stroke-width="1.1"/><text x="0" y="3.60" transform="matrix(1.314,-0.912,1.309,0.732,299.8,312.8)" font-family="Liberation Sans" font-size="10" fill="#55e49a" stroke="#55e49a" stroke-width="0.3" text-anchor="middle">US</text><text x="0" y="3.60" transform="matrix(1.314,-0.912,1.309,0.732,345.2,314.6)" font-family="Liberation Sans" font-size="10" fill="#f02a2a" stroke="#f02a2a" stroke-width="0.3" text-anchor="middle">SL</text><text x="0" y="3.60" transform="matrix(1.314,-0.912,1.309,0.732,304,342.4)" font-family="Liberation Sans" font-size="10" fill="#f02a2a" stroke="#f02a2a" stroke-width="0.3" text-anchor="middle">SR</text><text x="0" y="3.60" transform="matrix(1.314,-0.912,1.309,0.732,352.3,342.4)" font-family="Liberation Sans" font-size="10" fill="#55e49a" stroke="#55e49a" stroke-width="0.3" text-anchor="middle">DS</text><text x="0" y="3.60" transform="matrix(1.290,-0.750,-0.180,1.500,328.8,298.8)" font-family="Liberation Sans" font-size="10" fill="#17a7e0" stroke="#17a7e0" stroke-width="0.3" text-anchor="middle">UP</text><circle cx="283" cy="311" r="1.2" fill="#e63a2a"/><polygon points="85,494 108,493.5 117,501 120.5,510 119.5,527 98.5,538.5 79.5,530 77,511 80.5,501" fill="#9fcdf0"/><polygon points="88,496 107,495.5 115,503 98.5,512 83.5,504.5" fill="#c2d5e6"/><polygon points="79.5,512 97,515.5 97,535 81.5,528" fill="#bdd2e4"/><polygon points="100,515.5 118.5,511 118,526 100,535" fill="#bdd2e4"/><ellipse cx="91.5" cy="500.3" rx="3.25" ry="1.9" transform="rotate(-28 91.5 500.3)" fill="#fff"/><ellipse cx="100.5" cy="503.5" rx="3.75" ry="1.9" transform="rotate(-28 100.5 503.5)" fill="#fff"/><ellipse cx="87.5" cy="522" rx="3.75" ry="1.9" transform="rotate(40 87.5 522)" fill="#fff"/><ellipse cx="110" cy="521" rx="4.5" ry="1.9" transform="rotate(-33 110 521)" fill="#fff"/><ellipse cx="95.5" cy="497.5" rx="2" ry="1.3" fill="#1530e0"/><path d="M98.5,513 V542" stroke="#2040c0" stroke-width="0.7"/><path d="M73,527 L98.5,542" stroke="#3fc040" stroke-width="0.7"/><path d="M98.5,542 L124,528" stroke="#e06040" stroke-width="0.7"/><text x="70" y="528" font-family="Liberation Sans" font-size="4" fill="#4c4">Y</text><text x="125.5" y="528.5" font-family="Liberation Sans" font-size="4" fill="#e64">X</text><text x="97" y="512" font-family="Liberation Sans" font-size="4" fill="#24c">Z</text></g></svg><div class="a" style="left:61px;top:65.5px;width:407.5px;height:487px;border:1px solid #b96ccc"></div><div class="a" style="left:580.5px;top:10px;width:416.5px;height:551px;background:#000;border-radius:5px 5px 0 0"></div><div class="a" style="left:580.5px;top:10px;width:416.5px;height:9.5px;background:#e7e7e7;border-radius:5px 5px 0 0"></div><div class="a" style="left:582.9px;top:12.5px;width:4.2px;height:4.2px;border-radius:50%;background:#d0d0d0"></div><div class="a" style="left:589.6999999999999px;top:12.5px;width:4.2px;height:4.2px;border-radius:50%;background:#d0d0d0"></div><div class="a" style="left:596.4px;top:12.5px;width:4.2px;height:4.2px;border-radius:50%;background:#d0d0d0"></div><div class="t" style="left:738px;width:100px;text-align:center;top:13.74px;font-size:4.3px;color:#b0b0b0;font-weight:normal;">Eos : 1</div><div class="a" style="left:580.5px;top:19.5px;width:416.5px;height:10.6px;background:#161616;"></div><div class="a" style="left:580.5px;top:30px;width:416.5px;height:0.8px;background:#7a5410;"></div><div class="a" style="left:584px;top:21.5px;width:9.5px;height:6.5px;background:#101010;border:0.8px solid #c98a17;border-radius:1.5px"></div><div class="a" style="left:587.3px;top:23px;width:2.8px;height:3.5px;background:#ddd;border-radius:0.3px;opacity:0.8"></div><div class="a" style="left:601.5px;top:21.5px;width:9.5px;height:6.5px;background:#101010;border:0.8px solid #c98a17;border-radius:1.5px"></div><div class="a" style="left:604.8px;top:23px;width:2.8px;height:3.5px;background:#ddd;border-radius:0.3px;opacity:0.8"></div><div class="a" style="left:619px;top:21.5px;width:9.5px;height:6.5px;background:#101010;border:0.8px solid #8a8a8a;border-radius:1.5px"></div><div class="a" style="left:622.3px;top:23px;width:2.8px;height:3.5px;background:#222;border-radius:0.3px;opacity:0.8"></div><div class="a" style="left:636px;top:21.5px;width:9.5px;height:6.5px;background:#101010;border:0.8px solid #8a8a8a;border-radius:1.5px"></div><div class="a" style="left:639.3px;top:23px;width:2.8px;height:3.5px;background:#222;border-radius:0.3px;opacity:0.8"></div><div class="a" style="left:586.5px;top:28.5px;width:4.5px;height:1px;background:#c98a17;"></div><div class="t" style="left:738px;width:100px;text-align:center;top:23.97px;font-size:4.6px;color:#f0f0f0;font-weight:normal;">2025 Curtain Movement Example</div><svg class="a" style="left:892px;top:21.5px;" width="6" height="7" viewBox="0 0 6 7"><path d="M1,6.5 L5,0.8" stroke="#ccc" stroke-width="0.9"/></svg><svg class="a" style="left:908px;top:21.5px;" width="8" height="7" viewBox="0 0 8 7"><path d="M0.5,1 H7.5 M1.5,6.5 L3,1 M6.5,6.5 L5,1 M4,1 V6.5" stroke="#ddd" stroke-width="0.8" fill="none"/></svg><div class="a" style="left:925px;top:22px;width:9px;height:5px;background:none;border:0.7px solid #bbb;border-radius:1px"></div><div class="a" style="left:928px;top:23.5px;width:3px;height:2px;background:#bbb;"></div><svg class="a" style="left:942px;top:21px;" width="8" height="8" viewBox="0 0 8 8"><path d="M0.5,1 H7.5 M0.5,3 H7.5 M0.5,5 H7.5 M0.5,7 H7.5 M2,1 V7 M6,1 V7" stroke="#666" stroke-width="0.5"/></svg><div class="t" style="left:958px;top:22.98px;font-size:6.4px;color:#e8e8e8;font-weight:bold;">3:04:42 PM</div><div class="a" style="left:580.5px;top:30.8px;width:416.5px;height:470px;background:#000;border-right:0.6px solid #6a4610;border-bottom:0.6px solid #6a4610"></div><div class="a" style="left:583.5px;top:33px;width:21.5px;height:11.5px;background:#151515;border:0.7px solid #2e2e3c;border-radius:1.3px"></div><div class="t" style="left:544.25px;width:100px;text-align:center;top:37.24px;font-size:4.2px;color:#3c3c48;font-weight:normal;-webkit-text-stroke:0.1px #3c3c48;">Intens</div><div class="a" style="left:583.5px;top:46.5px;width:21.5px;height:11.5px;background:#151515;border:0.7px solid #2e2e3c;border-radius:1.3px"></div><div class="t" style="left:544.25px;width:100px;text-align:center;top:50.74px;font-size:4.2px;color:#d49a1a;font-weight:normal;-webkit-text-stroke:0.1px #d49a1a;">Focus</div><div class="a" style="left:583.5px;top:60px;width:21.5px;height:11.5px;background:#151515;border:0.7px solid #2e2e3c;border-radius:1.3px"></div><div class="t" style="left:544.25px;width:100px;text-align:center;top:64.24px;font-size:4.2px;color:#3c3c48;font-weight:normal;-webkit-text-stroke:0.1px #3c3c48;">Color</div><div class="a" style="left:583.5px;top:73.2px;width:21.5px;height:11.5px;background:#151515;border:0.7px solid #2e2e3c;border-radius:1.3px"></div><div class="t" style="left:544.25px;width:100px;text-align:center;top:77.44px;font-size:4.2px;color:#d49a1a;font-weight:normal;-webkit-text-stroke:0.1px #d49a1a;">Form</div><div class="a" style="left:583.5px;top:86.7px;width:21.5px;height:11.5px;background:#151515;border:0.7px solid #2e2e3c;border-radius:1.3px"></div><div class="t" style="left:544.25px;width:100px;text-align:center;top:90.94px;font-size:4.2px;color:#3c3c48;font-weight:normal;-webkit-text-stroke:0.1px #3c3c48;">Image</div><div class="a" style="left:583.5px;top:100px;width:21.5px;height:11.5px;background:#151515;border:0.7px solid #2e2e3c;border-radius:1.3px"></div><div class="t" style="left:544.25px;width:100px;text-align:center;top:104.24px;font-size:4.2px;color:#3c3c48;font-weight:normal;-webkit-text-stroke:0.1px #3c3c48;">Shutter</div><div class="a" style="left:583.5px;top:114.5px;width:21.5px;height:11.5px;background:#1b1b1b;border:0.7px solid #363644;border-radius:1.3px"></div><svg class="a" style="left:591.2px;top:117.0px;" width="6" height="6.4" viewBox="0 0 6 6.4"><path d="M3,0.5 L5.6,3 H4.7 V5.6 H1.3 V3 H0.4 Z" fill="none" stroke="#ddd" stroke-width="0.65" stroke-linejoin="round"/><circle cx="3" cy="3.6" r="0.8" fill="#ddd"/></svg><div class="a" style="left:583.5px;top:128.5px;width:21.5px;height:12.5px;background:#1b1b1b;border:0.7px solid #363644;border-radius:1.3px"></div><div class="t" style="left:544.25px;width:100px;text-align:center;top:133.13px;font-size:4.4px;color:#e8e8e8;font-weight:normal;-webkit-text-stroke:0.1px #e8e8e8;">AllNPs</div><div class="a" style="left:607.3px;top:34px;width:21.2px;height:9px;background:#181818;border:0.7px solid #363644;border-radius:1.3px"></div><div class="t" style="left:567.9px;width:100px;text-align:center;top:36.93px;font-size:4.3px;color:#d49a1a;font-weight:normal;-webkit-text-stroke:0.1px #d49a1a;">Focus</div><div class="a" style="left:607.3px;top:44px;width:21.2px;height:13px;background:#1b1b1b;border:0.7px solid #363644;border-radius:1.3px"></div><svg class="a" style="left:614.9px;top:47.3px;" width="6" height="6.4" viewBox="0 0 6 6.4"><path d="M3,0.5 L5.6,3 H4.7 V5.6 H1.3 V3 H0.4 Z" fill="none" stroke="#ddd" stroke-width="0.65" stroke-linejoin="round"/><circle cx="3" cy="3.6" r="0.8" fill="#ddd"/></svg><div class="a" style="left:607.3px;top:58px;width:21.2px;height:12.5px;background:#1b1b1b;border:0.7px solid #363644;border-radius:1.3px"></div><div class="t" style="left:567.9px;width:100px;text-align:center;top:62.30px;font-size:5px;color:#ddd;font-weight:normal;-webkit-text-stroke:0.1px #ddd;">-</div><div class="a" style="left:607.3px;top:72.2px;width:21.2px;height:14.5px;background:#1b1b1b;border:0.7px solid #363644;border-radius:1.3px"></div><div class="t" style="left:567.9px;width:100px;text-align:center;top:75.19px;font-size:4.6px;color:#ddd;font-weight:normal;-webkit-text-stroke:0.1px #ddd;">Invert</div><div class="t" style="left:567.9px;width:100px;text-align:center;top:80.25px;font-size:4.6px;color:#ddd;font-weight:normal;-webkit-text-stroke:0.1px #ddd;">Pan</div><div class="a" style="left:607.3px;top:88.4px;width:21.2px;height:14px;background:#1b1b1b;border:0.7px solid #363644;border-radius:1.3px"></div><div class="t" style="left:567.9px;width:100px;text-align:center;top:93.67px;font-size:4.6px;color:#ddd;font-weight:normal;-webkit-text-stroke:0.1px #ddd;">Invert Tilt</div><div class="a" style="left:607.3px;top:104.2px;width:21.2px;height:14.5px;background:#1b1b1b;border:0.7px solid #363644;border-radius:1.3px"></div><div class="t" style="left:567.9px;width:100px;text-align:center;top:105.98px;font-size:3.8px;color:#ddd;font-weight:normal;-webkit-text-stroke:0.1px #ddd;">XYZ</div><div class="t" style="left:567.9px;width:100px;text-align:center;top:110.16px;font-size:3.8px;color:#ddd;font-weight:normal;-webkit-text-stroke:0.1px #ddd;">Format</div><div class="t" style="left:567.9px;width:100px;text-align:center;top:114.34px;font-size:3.8px;color:#ddd;font-weight:normal;-webkit-text-stroke:0.1px #ddd;">Enable</div><div class="a" style="left:720px;top:34.2px;width:21.5px;height:8.8px;background:#181818;border:0.7px solid #363644;border-radius:1.3px"></div><div class="t" style="left:680.75px;width:100px;text-align:center;top:37.03px;font-size:4.3px;color:#d49a1a;font-weight:normal;-webkit-text-stroke:0.1px #d49a1a;">Form</div><div class="a" style="left:720px;top:44.5px;width:21.5px;height:12px;background:#1b1b1b;border:0.7px solid #363644;border-radius:1.3px"></div><svg class="a" style="left:727.7px;top:47.3px;" width="6" height="6.4" viewBox="0 0 6 6.4"><path d="M3,0.5 L5.6,3 H4.7 V5.6 H1.3 V3 H0.4 Z" fill="none" stroke="#ddd" stroke-width="0.65" stroke-linejoin="round"/><circle cx="3" cy="3.6" r="0.8" fill="#ddd"/></svg><div class="a" style="left:720px;top:58.5px;width:21.5px;height:12.5px;background:#1b1b1b;border:0.7px solid #363644;border-radius:1.3px"></div><div class="t" style="left:680.75px;width:100px;text-align:center;top:62.80px;font-size:5px;color:#ddd;font-weight:normal;-webkit-text-stroke:0.1px #ddd;">-</div><div class="a" style="left:630.3px;top:33px;width:27px;height:109px;background:#121212;"></div><div class="a" style="left:630.3px;top:34.2px;width:27px;height:8.6px;background:#1b1b1b;border:0.7px solid #363644;border-radius:1.3px"></div><div class="t" style="left:593.8px;width:100px;text-align:center;top:36.99px;font-size:4.2px;color:#e6e6e6;font-weight:normal;-webkit-text-stroke:0.1px #e6e6e6;">Coordinate X</div><div class="t" style="left:593.8px;width:100px;text-align:center;top:46.88px;font-size:4.4px;color:#3a3a4a;font-weight:normal;">0</div><div class="a" style="left:630.3px;top:53px;width:27px;height:8.8px;background:#1b1b1b;border:0.7px solid #363644;border-radius:1.3px"></div><svg class="a" style="left:640.8px;top:54.199999999999996px;" width="6" height="6.4" viewBox="0 0 6 6.4"><path d="M3,0.5 L5.6,3 H4.7 V5.6 H1.3 V3 H0.4 Z" fill="none" stroke="#ddd" stroke-width="0.65" stroke-linejoin="round"/><circle cx="3" cy="3.6" r="0.8" fill="#ddd"/></svg><div class="a" style="left:630.3px;top:63.5px;width:27px;height:8.2px;background:#1b1b1b;border:0.7px solid #363644;border-radius:1.3px"></div><div class="t" style="left:593.8px;width:100px;text-align:center;top:66.03px;font-size:4.3px;color:#e6e6e6;font-weight:normal;-webkit-text-stroke:0.1px #e6e6e6;">Max</div><svg class="a" style="left:633.5999999999999px;top:72.8px;" width="20.4" height="58.4" viewBox="0 0 20.4 58.4"><rect x="0" y="0" width="20.4" height="58.4" fill="#1c1c1c"/><rect x="0" y="0.00" width="20.4" height="4.4" fill="#262626"/><rect x="0" y="5.30" width="20.4" height="4.4" fill="#2b2b2b"/><rect x="0" y="10.60" width="20.4" height="4.4" fill="#262626"/><rect x="0" y="15.90" width="20.4" height="4.4" fill="#2b2b2b"/><rect x="0" y="21.20" width="20.4" height="4.4" fill="#262626"/><rect x="0" y="26.50" width="20.4" height="4.4" fill="#2b2b2b"/><rect x="0" y="31.80" width="20.4" height="4.4" fill="#262626"/><rect x="0" y="37.10" width="20.4" height="4.4" fill="#2b2b2b"/><rect x="0" y="42.40" width="20.4" height="4.4" fill="#262626"/><rect x="0" y="47.70" width="20.4" height="4.4" fill="#2b2b2b"/><rect x="0" y="53.00" width="20.4" height="4.4" fill="#262626"/></svg><div class="a" style="left:632.6999999999999px;top:101px;width:22.2px;height:2.8px;background:#6a6a6a;border:0.5px solid #8c8c8c;border-radius:1.4px"></div><div class="a" style="left:630.3px;top:132.3px;width:27px;height:9.2px;background:#1b1b1b;border:0.7px solid #363644;border-radius:1.3px"></div><div class="t" style="left:593.8px;width:100px;text-align:center;top:135.34px;font-size:4.3px;color:#e6e6e6;font-weight:normal;-webkit-text-stroke:0.1px #e6e6e6;">Min</div><div class="a" style="left:660.3px;top:33px;width:27px;height:109px;background:#121212;"></div><div class="a" style="left:660.3px;top:34.2px;width:27px;height:8.6px;background:#1b1b1b;border:0.7px solid #363644;border-radius:1.3px"></div><div class="t" style="left:623.8px;width:100px;text-align:center;top:36.99px;font-size:4.2px;color:#e6e6e6;font-weight:normal;-webkit-text-stroke:0.1px #e6e6e6;">Coordinate Y</div><div class="t" style="left:623.8px;width:100px;text-align:center;top:46.88px;font-size:4.4px;color:#3a3a4a;font-weight:normal;">0</div><div class="a" style="left:660.3px;top:53px;width:27px;height:8.8px;background:#1b1b1b;border:0.7px solid #363644;border-radius:1.3px"></div><svg class="a" style="left:670.8px;top:54.199999999999996px;" width="6" height="6.4" viewBox="0 0 6 6.4"><path d="M3,0.5 L5.6,3 H4.7 V5.6 H1.3 V3 H0.4 Z" fill="none" stroke="#ddd" stroke-width="0.65" stroke-linejoin="round"/><circle cx="3" cy="3.6" r="0.8" fill="#ddd"/></svg><div class="a" style="left:660.3px;top:63.5px;width:27px;height:8.2px;background:#1b1b1b;border:0.7px solid #363644;border-radius:1.3px"></div><div class="t" style="left:623.8px;width:100px;text-align:center;top:66.03px;font-size:4.3px;color:#e6e6e6;font-weight:normal;-webkit-text-stroke:0.1px #e6e6e6;">Max</div><svg class="a" style="left:663.5999999999999px;top:72.8px;" width="20.4" height="58.4" viewBox="0 0 20.4 58.4"><rect x="0" y="0" width="20.4" height="58.4" fill="#1c1c1c"/><rect x="0" y="0.00" width="20.4" height="4.4" fill="#262626"/><rect x="0" y="5.30" width="20.4" height="4.4" fill="#2b2b2b"/><rect x="0" y="10.60" width="20.4" height="4.4" fill="#262626"/><rect x="0" y="15.90" width="20.4" height="4.4" fill="#2b2b2b"/><rect x="0" y="21.20" width="20.4" height="4.4" fill="#262626"/><rect x="0" y="26.50" width="20.4" height="4.4" fill="#2b2b2b"/><rect x="0" y="31.80" width="20.4" height="4.4" fill="#262626"/><rect x="0" y="37.10" width="20.4" height="4.4" fill="#2b2b2b"/><rect x="0" y="42.40" width="20.4" height="4.4" fill="#262626"/><rect x="0" y="47.70" width="20.4" height="4.4" fill="#2b2b2b"/><rect x="0" y="53.00" width="20.4" height="4.4" fill="#262626"/></svg><div class="a" style="left:662.6999999999999px;top:101px;width:22.2px;height:2.8px;background:#6a6a6a;border:0.5px solid #8c8c8c;border-radius:1.4px"></div><div class="a" style="left:660.3px;top:132.3px;width:27px;height:9.2px;background:#1b1b1b;border:0.7px solid #363644;border-radius:1.3px"></div><div class="t" style="left:623.8px;width:100px;text-align:center;top:135.34px;font-size:4.3px;color:#e6e6e6;font-weight:normal;-webkit-text-stroke:0.1px #e6e6e6;">Min</div><div class="a" style="left:690.3px;top:33px;width:27px;height:109px;background:#121212;"></div><div class="a" style="left:690.3px;top:34.2px;width:27px;height:8.6px;background:#1b1b1b;border:0.7px solid #363644;border-radius:1.3px"></div><div class="t" style="left:653.8px;width:100px;text-align:center;top:36.99px;font-size:4.2px;color:#e6e6e6;font-weight:normal;-webkit-text-stroke:0.1px #e6e6e6;">Coordinate Z</div><div class="t" style="left:653.8px;width:100px;text-align:center;top:46.88px;font-size:4.4px;color:#c21a1a;font-weight:normal;">23</div><div class="a" style="left:690.3px;top:53px;width:27px;height:8.8px;background:#1b1b1b;border:0.7px solid #363644;border-radius:1.3px"></div><svg class="a" style="left:700.8px;top:54.199999999999996px;" width="6" height="6.4" viewBox="0 0 6 6.4"><path d="M3,0.5 L5.6,3 H4.7 V5.6 H1.3 V3 H0.4 Z" fill="none" stroke="#ddd" stroke-width="0.65" stroke-linejoin="round"/><circle cx="3" cy="3.6" r="0.8" fill="#ddd"/></svg><div class="a" style="left:690.3px;top:63.5px;width:27px;height:8.2px;background:#1b1b1b;border:0.7px solid #363644;border-radius:1.3px"></div><div class="t" style="left:653.8px;width:100px;text-align:center;top:66.03px;font-size:4.3px;color:#e6e6e6;font-weight:normal;-webkit-text-stroke:0.1px #e6e6e6;">Max</div><svg class="a" style="left:693.5999999999999px;top:72.8px;" width="20.4" height="58.4" viewBox="0 0 20.4 58.4"><rect x="0" y="0" width="20.4" height="58.4" fill="#1c1c1c"/><rect x="0" y="0.00" width="20.4" height="4.4" fill="#262626"/><rect x="0" y="5.30" width="20.4" height="4.4" fill="#2b2b2b"/><rect x="0" y="10.60" width="20.4" height="4.4" fill="#262626"/><rect x="0" y="15.90" width="20.4" height="4.4" fill="#2b2b2b"/><rect x="0" y="21.20" width="20.4" height="4.4" fill="#262626"/><rect x="0" y="26.50" width="20.4" height="4.4" fill="#2b2b2b"/><rect x="0" y="31.80" width="20.4" height="4.4" fill="#262626"/><rect x="0" y="37.10" width="20.4" height="4.4" fill="#2b2b2b"/><rect x="0" y="42.40" width="20.4" height="4.4" fill="#262626"/><rect x="0" y="47.70" width="20.4" height="4.4" fill="#2b2b2b"/><rect x="0" y="53.00" width="20.4" height="4.4" fill="#262626"/></svg><div class="a" style="left:692.6999999999999px;top:101px;width:22.2px;height:2.8px;background:#6a6a6a;border:0.5px solid #8c8c8c;border-radius:1.4px"></div><div class="a" style="left:690.3px;top:132.3px;width:27px;height:9.2px;background:#1b1b1b;border:0.7px solid #363644;border-radius:1.3px"></div><div class="t" style="left:653.8px;width:100px;text-align:center;top:135.34px;font-size:4.3px;color:#e6e6e6;font-weight:normal;-webkit-text-stroke:0.1px #e6e6e6;">Min</div><div class="a" style="left:743.5px;top:33px;width:32px;height:109px;background:#121212;"></div><div class="a" style="left:743.5px;top:34.2px;width:32px;height:8.6px;background:#1b1b1b;border:0.7px solid #363644;border-radius:1.3px"></div><div class="t" style="left:709.5px;width:100px;text-align:center;top:36.99px;font-size:4.2px;color:#e6e6e6;font-weight:normal;-webkit-text-stroke:0.1px #e6e6e6;">Generic Control</div><div class="t" style="left:709.5px;width:100px;text-align:center;top:46.88px;font-size:4.4px;color:#c21a1a;font-weight:normal;">0</div><div class="a" style="left:743.5px;top:53px;width:32px;height:8.8px;background:#1b1b1b;border:0.7px solid #363644;border-radius:1.3px"></div><svg class="a" style="left:756.5px;top:54.199999999999996px;" width="6" height="6.4" viewBox="0 0 6 6.4"><path d="M3,0.5 L5.6,3 H4.7 V5.6 H1.3 V3 H0.4 Z" fill="none" stroke="#ddd" stroke-width="0.65" stroke-linejoin="round"/><circle cx="3" cy="3.6" r="0.8" fill="#ddd"/></svg><div class="a" style="left:743.5px;top:63.5px;width:32px;height:8.2px;background:#1b1b1b;border:0.7px solid #363644;border-radius:1.3px"></div><div class="t" style="left:709.5px;width:100px;text-align:center;top:66.03px;font-size:4.3px;color:#e6e6e6;font-weight:normal;-webkit-text-stroke:0.1px #e6e6e6;">Max</div><svg class="a" style="left:746.8px;top:72.8px;" width="25.4" height="58.4" viewBox="0 0 25.4 58.4"><rect x="0" y="0" width="25.4" height="58.4" fill="#1c1c1c"/><rect x="0" y="0.00" width="25.4" height="4.4" fill="#262626"/><rect x="0" y="5.30" width="25.4" height="4.4" fill="#2b2b2b"/><rect x="0" y="10.60" width="25.4" height="4.4" fill="#262626"/><rect x="0" y="15.90" width="25.4" height="4.4" fill="#2b2b2b"/><rect x="0" y="21.20" width="25.4" height="4.4" fill="#262626"/><rect x="0" y="26.50" width="25.4" height="4.4" fill="#2b2b2b"/><rect x="0" y="31.80" width="25.4" height="4.4" fill="#262626"/><rect x="0" y="37.10" width="25.4" height="4.4" fill="#2b2b2b"/><rect x="0" y="42.40" width="25.4" height="4.4" fill="#262626"/><rect x="0" y="47.70" width="25.4" height="4.4" fill="#2b2b2b"/><rect x="0" y="53.00" width="25.4" height="4.4" fill="#262626"/></svg><div class="a" style="left:745.9px;top:101px;width:27.2px;height:2.8px;background:#6a6a6a;border:0.5px solid #8c8c8c;border-radius:1.4px"></div><div class="a" style="left:743.5px;top:132.3px;width:32px;height:9.2px;background:#1b1b1b;border:0.7px solid #363644;border-radius:1.3px"></div><div class="t" style="left:709.5px;width:100px;text-align:center;top:135.34px;font-size:4.3px;color:#e6e6e6;font-weight:normal;-webkit-text-stroke:0.1px #e6e6e6;">Min</div><div class="a" style="left:778px;top:33px;width:22.5px;height:109px;background:#121212;"></div><div class="a" style="left:778px;top:34.2px;width:22.5px;height:8.6px;background:#1b1b1b;border:0.7px solid #363644;border-radius:1.3px"></div><div class="t" style="left:739.25px;width:100px;text-align:center;top:36.88px;font-size:4.4px;color:#e6e6e6;font-weight:normal;-webkit-text-stroke:0.1px #e6e6e6;">X Scale</div><div class="t" style="left:739.25px;width:100px;text-align:center;top:46.88px;font-size:4.4px;color:#3a3a4a;font-weight:normal;">0</div><div class="a" style="left:778px;top:53px;width:22.5px;height:8.8px;background:#1b1b1b;border:0.7px solid #363644;border-radius:1.3px"></div><svg class="a" style="left:786.25px;top:54.199999999999996px;" width="6" height="6.4" viewBox="0 0 6 6.4"><path d="M3,0.5 L5.6,3 H4.7 V5.6 H1.3 V3 H0.4 Z" fill="none" stroke="#ddd" stroke-width="0.65" stroke-linejoin="round"/><circle cx="3" cy="3.6" r="0.8" fill="#ddd"/></svg><div class="a" style="left:778px;top:63.5px;width:22.5px;height:8.2px;background:#1b1b1b;border:0.7px solid #363644;border-radius:1.3px"></div><div class="t" style="left:739.25px;width:100px;text-align:center;top:66.03px;font-size:4.3px;color:#e6e6e6;font-weight:normal;-webkit-text-stroke:0.1px #e6e6e6;">Max</div><svg class="a" style="left:781.3px;top:72.8px;" width="15.9" height="58.4" viewBox="0 0 15.9 58.4"><rect x="0" y="0" width="15.9" height="58.4" fill="#1c1c1c"/><rect x="0" y="0.00" width="15.9" height="4.4" fill="#262626"/><rect x="0" y="5.30" width="15.9" height="4.4" fill="#2b2b2b"/><rect x="0" y="10.60" width="15.9" height="4.4" fill="#262626"/><rect x="0" y="15.90" width="15.9" height="4.4" fill="#2b2b2b"/><rect x="0" y="21.20" width="15.9" height="4.4" fill="#262626"/><rect x="0" y="26.50" width="15.9" height="4.4" fill="#2b2b2b"/><rect x="0" y="31.80" width="15.9" height="4.4" fill="#262626"/><rect x="0" y="37.10" width="15.9" height="4.4" fill="#2b2b2b"/><rect x="0" y="42.40" width="15.9" height="4.4" fill="#262626"/><rect x="0" y="47.70" width="15.9" height="4.4" fill="#2b2b2b"/><rect x="0" y="53.00" width="15.9" height="4.4" fill="#262626"/></svg><div class="a" style="left:780.4px;top:101px;width:17.7px;height:2.8px;background:#6a6a6a;border:0.5px solid #8c8c8c;border-radius:1.4px"></div><div class="a" style="left:778px;top:132.3px;width:22.5px;height:9.2px;background:#1b1b1b;border:0.7px solid #363644;border-radius:1.3px"></div><div class="t" style="left:739.25px;width:100px;text-align:center;top:135.34px;font-size:4.3px;color:#e6e6e6;font-weight:normal;-webkit-text-stroke:0.1px #e6e6e6;">Min</div><div class="a" style="left:803px;top:33px;width:21.8px;height:109px;background:#121212;"></div><div class="a" style="left:803px;top:34.2px;width:21.8px;height:8.6px;background:#1b1b1b;border:0.7px solid #363644;border-radius:1.3px"></div><div class="t" style="left:763.9px;width:100px;text-align:center;top:36.88px;font-size:4.4px;color:#e6e6e6;font-weight:normal;-webkit-text-stroke:0.1px #e6e6e6;">Y Scale</div><div class="t" style="left:763.9px;width:100px;text-align:center;top:46.88px;font-size:4.4px;color:#3a3a4a;font-weight:normal;">0</div><div class="a" style="left:803px;top:53px;width:21.8px;height:8.8px;background:#1b1b1b;border:0.7px solid #363644;border-radius:1.3px"></div><svg class="a" style="left:810.9px;top:54.199999999999996px;" width="6" height="6.4" viewBox="0 0 6 6.4"><path d="M3,0.5 L5.6,3 H4.7 V5.6 H1.3 V3 H0.4 Z" fill="none" stroke="#ddd" stroke-width="0.65" stroke-linejoin="round"/><circle cx="3" cy="3.6" r="0.8" fill="#ddd"/></svg><div class="a" style="left:803px;top:63.5px;width:21.8px;height:8.2px;background:#1b1b1b;border:0.7px solid #363644;border-radius:1.3px"></div><div class="t" style="left:763.9px;width:100px;text-align:center;top:66.03px;font-size:4.3px;color:#e6e6e6;font-weight:normal;-webkit-text-stroke:0.1px #e6e6e6;">Max</div><svg class="a" style="left:806.3px;top:72.8px;" width="15.200000000000001" height="58.4" viewBox="0 0 15.200000000000001 58.4"><rect x="0" y="0" width="15.200000000000001" height="58.4" fill="#1c1c1c"/><rect x="0" y="0.00" width="15.200000000000001" height="4.4" fill="#262626"/><rect x="0" y="5.30" width="15.200000000000001" height="4.4" fill="#2b2b2b"/><rect x="0" y="10.60" width="15.200000000000001" height="4.4" fill="#262626"/><rect x="0" y="15.90" width="15.200000000000001" height="4.4" fill="#2b2b2b"/><rect x="0" y="21.20" width="15.200000000000001" height="4.4" fill="#262626"/><rect x="0" y="26.50" width="15.200000000000001" height="4.4" fill="#2b2b2b"/><rect x="0" y="31.80" width="15.200000000000001" height="4.4" fill="#262626"/><rect x="0" y="37.10" width="15.200000000000001" height="4.4" fill="#2b2b2b"/><rect x="0" y="42.40" width="15.200000000000001" height="4.4" fill="#262626"/><rect x="0" y="47.70" width="15.200000000000001" height="4.4" fill="#2b2b2b"/><rect x="0" y="53.00" width="15.200000000000001" height="4.4" fill="#262626"/></svg><div class="a" style="left:805.4px;top:101px;width:17.0px;height:2.8px;background:#6a6a6a;border:0.5px solid #8c8c8c;border-radius:1.4px"></div><div class="a" style="left:803px;top:132.3px;width:21.8px;height:9.2px;background:#1b1b1b;border:0.7px solid #363644;border-radius:1.3px"></div><div class="t" style="left:763.9px;width:100px;text-align:center;top:135.34px;font-size:4.3px;color:#e6e6e6;font-weight:normal;-webkit-text-stroke:0.1px #e6e6e6;">Min</div><div class="a" style="left:827.2px;top:33px;width:21.8px;height:109px;background:#121212;"></div><div class="a" style="left:827.2px;top:34.2px;width:21.8px;height:8.6px;background:#1b1b1b;border:0.7px solid #363644;border-radius:1.3px"></div><div class="t" style="left:788.1px;width:100px;text-align:center;top:36.88px;font-size:4.4px;color:#e6e6e6;font-weight:normal;-webkit-text-stroke:0.1px #e6e6e6;">Z Scale</div><div class="t" style="left:788.1px;width:100px;text-align:center;top:46.88px;font-size:4.4px;color:#3a3a4a;font-weight:normal;">0</div><div class="a" style="left:827.2px;top:53px;width:21.8px;height:8.8px;background:#1b1b1b;border:0.7px solid #363644;border-radius:1.3px"></div><svg class="a" style="left:835.1px;top:54.199999999999996px;" width="6" height="6.4" viewBox="0 0 6 6.4"><path d="M3,0.5 L5.6,3 H4.7 V5.6 H1.3 V3 H0.4 Z" fill="none" stroke="#ddd" stroke-width="0.65" stroke-linejoin="round"/><circle cx="3" cy="3.6" r="0.8" fill="#ddd"/></svg><div class="a" style="left:827.2px;top:63.5px;width:21.8px;height:8.2px;background:#1b1b1b;border:0.7px solid #363644;border-radius:1.3px"></div><div class="t" style="left:788.1px;width:100px;text-align:center;top:66.03px;font-size:4.3px;color:#e6e6e6;font-weight:normal;-webkit-text-stroke:0.1px #e6e6e6;">Max</div><svg class="a" style="left:830.5px;top:72.8px;" width="15.200000000000001" height="58.4" viewBox="0 0 15.200000000000001 58.4"><rect x="0" y="0" width="15.200000000000001" height="58.4" fill="#1c1c1c"/><rect x="0" y="0.00" width="15.200000000000001" height="4.4" fill="#262626"/><rect x="0" y="5.30" width="15.200000000000001" height="4.4" fill="#2b2b2b"/><rect x="0" y="10.60" width="15.200000000000001" height="4.4" fill="#262626"/><rect x="0" y="15.90" width="15.200000000000001" height="4.4" fill="#2b2b2b"/><rect x="0" y="21.20" width="15.200000000000001" height="4.4" fill="#262626"/><rect x="0" y="26.50" width="15.200000000000001" height="4.4" fill="#2b2b2b"/><rect x="0" y="31.80" width="15.200000000000001" height="4.4" fill="#262626"/><rect x="0" y="37.10" width="15.200000000000001" height="4.4" fill="#2b2b2b"/><rect x="0" y="42.40" width="15.200000000000001" height="4.4" fill="#262626"/><rect x="0" y="47.70" width="15.200000000000001" height="4.4" fill="#2b2b2b"/><rect x="0" y="53.00" width="15.200000000000001" height="4.4" fill="#262626"/></svg><div class="a" style="left:829.6px;top:101px;width:17.0px;height:2.8px;background:#6a6a6a;border:0.5px solid #8c8c8c;border-radius:1.4px"></div><div class="a" style="left:827.2px;top:132.3px;width:21.8px;height:9.2px;background:#1b1b1b;border:0.7px solid #363644;border-radius:1.3px"></div><div class="t" style="left:788.1px;width:100px;text-align:center;top:135.34px;font-size:4.3px;color:#e6e6e6;font-weight:normal;-webkit-text-stroke:0.1px #e6e6e6;">Min</div><div class="a" style="left:852px;top:33px;width:26.5px;height:109px;background:#121212;"></div><div class="a" style="left:852px;top:34.2px;width:26.5px;height:8.6px;background:#1b1b1b;border:0.7px solid #363644;border-radius:1.3px"></div><div class="t" style="left:815.25px;width:100px;text-align:center;top:36.99px;font-size:4.2px;color:#e6e6e6;font-weight:normal;-webkit-text-stroke:0.1px #e6e6e6;">Rotate Mode</div><div class="t" style="left:815.25px;width:100px;text-align:center;top:46.88px;font-size:4.4px;color:#c21a1a;font-weight:normal;">10</div><div class="a" style="left:852px;top:53px;width:26.5px;height:8.8px;background:#1b1b1b;border:0.7px solid #363644;border-radius:1.3px"></div><svg class="a" style="left:862.25px;top:54.199999999999996px;" width="6" height="6.4" viewBox="0 0 6 6.4"><path d="M3,0.5 L5.6,3 H4.7 V5.6 H1.3 V3 H0.4 Z" fill="none" stroke="#ddd" stroke-width="0.65" stroke-linejoin="round"/><circle cx="3" cy="3.6" r="0.8" fill="#ddd"/></svg><div class="a" style="left:852px;top:63.5px;width:26.5px;height:8.2px;background:#1b1b1b;border:0.7px solid #363644;border-radius:1.3px"></div><div class="t" style="left:815.25px;width:100px;text-align:center;top:66.03px;font-size:4.3px;color:#e6e6e6;font-weight:normal;-webkit-text-stroke:0.1px #e6e6e6;">Max</div><svg class="a" style="left:855.3px;top:72.8px;" width="19.9" height="58.4" viewBox="0 0 19.9 58.4"><rect x="0" y="0" width="19.9" height="58.4" fill="#1c1c1c"/><rect x="0" y="0.00" width="19.9" height="4.4" fill="#262626"/><rect x="0" y="5.30" width="19.9" height="4.4" fill="#2b2b2b"/><rect x="0" y="10.60" width="19.9" height="4.4" fill="#262626"/><rect x="0" y="15.90" width="19.9" height="4.4" fill="#2b2b2b"/><rect x="0" y="21.20" width="19.9" height="4.4" fill="#262626"/><rect x="0" y="26.50" width="19.9" height="4.4" fill="#2b2b2b"/><rect x="0" y="31.80" width="19.9" height="4.4" fill="#262626"/><rect x="0" y="37.10" width="19.9" height="4.4" fill="#2b2b2b"/><rect x="0" y="42.40" width="19.9" height="4.4" fill="#262626"/><rect x="0" y="47.70" width="19.9" height="4.4" fill="#2b2b2b"/><rect x="0" y="53.00" width="19.9" height="4.4" fill="#262626"/></svg><div class="a" style="left:854.4px;top:101px;width:21.7px;height:2.8px;background:#6a6a6a;border:0.5px solid #8c8c8c;border-radius:1.4px"></div><div class="a" style="left:852px;top:132.3px;width:26.5px;height:9.2px;background:#1b1b1b;border:0.7px solid #363644;border-radius:1.3px"></div><div class="t" style="left:815.25px;width:100px;text-align:center;top:135.34px;font-size:4.3px;color:#e6e6e6;font-weight:normal;-webkit-text-stroke:0.1px #e6e6e6;">Min</div><div class="a" style="left:580.5px;top:500.8px;width:416.5px;height:60.2px;background:#161616;"></div><svg class="a" style="left:584px;top:503.5px;" width="7" height="7" viewBox="0 0 7 7"><circle cx="3.5" cy="3.5" r="2.6" fill="none" stroke="#c98a17" stroke-width="1"/><circle cx="3.5" cy="3.5" r="1" fill="#c98a17"/></svg><div class="a" style="left:593.7px;top:502px;width:31.799999999999955px;height:9.5px;background:#1d1d1d;border:0.5px solid #2c2c2c;border-radius:1px"></div><div class="t" style="left:559.6px;width:100px;text-align:center;top:505.54px;font-size:4.65px;color:#8a8a8a;font-weight:normal;">1 Live Table</div><div class="a" style="left:627px;top:502px;width:32px;height:9.5px;background:#1d1d1d;border:0.5px solid #2c2c2c;border-radius:1px"></div><div class="t" style="left:593.0px;width:100px;text-align:center;top:505.54px;font-size:4.65px;color:#8a8a8a;font-weight:normal;">2 PSD List 1</div><svg class="a" style="left:659.5px;top:500.5px;" width="40" height="13" viewBox="0 0 40 13"><path d="M0.5,13 V2 Q0.5,0.8 1.7,0.8 H35 Q36.5,0.8 36.5,2.2 L37.5,11 Q37.8,12.3 39.5,12.3" fill="#141414" stroke="#c98a17" stroke-width="0.7"/></svg><div class="t" style="left:628.2px;width:100px;text-align:center;top:505.43px;font-size:4.85px;color:#d49a1a;font-weight:normal;-webkit-text-stroke:0.15px #d49a1a;">5 ML Controls</div><div class="t" style="left:700.5px;top:504.80px;font-size:6px;color:#9a9a9a;font-weight:normal;">+</div><div class="a" style="left:580.5px;top:512.5px;width:416.5px;height:0.5px;background:#1a1a1a;"></div><div class="t" style="left:738.5px;width:100px;text-align:center;top:515.97px;font-size:4.6px;color:#e8e8e8;font-weight:normal;">2025 Curtain Movement Example</div><div class="t" style="left:739px;width:100px;text-align:center;top:521.01px;font-size:3.8px;color:#7a7a7a;font-weight:normal;">2024-11-08 08:59:04</div><svg class="a" style="left:956px;top:515px;" width="8" height="7" viewBox="0 0 8 7"><path d="M4,0.8 L7.3,6.3 H0.7 Z" fill="none" stroke="#ddd" stroke-width="0.7"/></svg><svg class="a" style="left:979px;top:514px;" width="8" height="8" viewBox="0 0 8 8"><rect x="1" y="3.5" width="5" height="4" fill="#ccc"/><path d="M4.5,3.5 V2 Q4.5,0.5 6,0.5 Q7.5,0.5 7.5,2" fill="none" stroke="#ccc" stroke-width="0.8"/></svg><div class="a" style="left:581px;top:524.5px;width:25px;height:10.5px;background:#1a1a1a;border:0.6px solid #34344a;border-radius:1px"></div><svg class="a" style="left:589.5px;top:526px;" width="8" height="7" viewBox="0 0 8 7"><path d="M4,0.8 L7.3,6.3 H0.7 Z" fill="none" stroke="#eee" stroke-width="0.8"/></svg><div class="a" style="left:606.5px;top:524.5px;width:96.89999999999998px;height:10.5px;background:#1a1a1a;border:0.5px solid #2c2c3a;border-radius:1px"></div><div class="a" style="left:703.8px;top:524.5px;width:96.80000000000007px;height:10.5px;background:#1a1a1a;border:0.5px solid #2c2c3a;border-radius:1px"></div><div class="a" style="left:801px;top:524.5px;width:97.70000000000005px;height:10.5px;background:#1a1a1a;border:0.5px solid #2c2c3a;border-radius:1px"></div><div class="a" style="left:899px;top:524.5px;width:97px;height:10.5px;background:#1a1a1a;border:0.5px solid #2c2c3a;border-radius:1px"></div><div class="a" style="left:581.5px;top:536px;width:379px;height:8.8px;background:#020202;border:0.7px solid #6a4a12;border-radius:1px"></div><div class="t" style="left:583.6px;top:538.84px;font-size:5.2px;color:#d4901a;font-weight:normal;">LIVE: Cue</div><div class="t" style="left:609.8px;top:538.78px;font-size:5.3px;color:#d4901a;font-weight:normal;">1001 :</div><div class="t" style="left:627.7px;top:538.84px;font-size:5.2px;color:#e8cf9a;font-weight:normal;">Chan 1 Form Home</div><div class="a" style="left:676.3px;top:538.8px;width:3.2px;height:3.2px;background:#e8a81a;transform:rotate(45deg)"></div><div class="a" style="left:954px;top:538px;width:3.2px;height:3.2px;border-radius:50%;border:0.6px solid #aaa"></div><div class="a" style="left:962.2px;top:536px;width:33px;height:8.8px;background:#151515;border:0.7px solid #6a4a12;border-radius:1px"></div><div class="t" style="left:928.7px;width:100px;text-align:center;top:539.29px;font-size:4.2px;color:#c98a17;font-weight:normal;">User 1 | Offline</div><div class="a" style="left:581.5px;top:546px;width:23px;height:14.2px;background:#141414;"></div><div class="a" style="left:606.5px;top:546px;width:23.0px;height:14.2px;background:#1b1b1b;border:0.7px solid #30303e;border-radius:1.3px"></div><div class="t" style="left:568.0px;width:100px;text-align:center;top:551.42px;font-size:4.5px;color:#e6e6e6;font-weight:normal;-webkit-text-stroke:0.1px #e6e6e6;">Intensity</div><div class="a" style="left:631.5px;top:546px;width:23.5px;height:14.2px;background:#1b1b1b;border:0.7px solid #30303e;border-radius:1.3px"></div><div class="t" style="left:593.25px;width:100px;text-align:center;top:551.42px;font-size:4.5px;color:#e6e6e6;font-weight:normal;-webkit-text-stroke:0.1px #e6e6e6;">Focus</div><div class="a" style="left:657px;top:546px;width:23px;height:14.2px;background:#1b1b1b;border:0.7px solid #30303e;border-radius:1.3px"></div><div class="t" style="left:618.5px;width:100px;text-align:center;top:551.42px;font-size:4.5px;color:#e6e6e6;font-weight:normal;-webkit-text-stroke:0.1px #e6e6e6;">Color</div><div class="a" style="left:682px;top:546px;width:23px;height:14.2px;background:#1b1b1b;border:0.7px solid #30303e;border-radius:1.3px"></div><div class="t" style="left:643.5px;width:100px;text-align:center;top:551.42px;font-size:4.5px;color:#e6e6e6;font-weight:normal;-webkit-text-stroke:0.1px #e6e6e6;">Form</div><div class="a" style="left:707px;top:546px;width:23.5px;height:14.2px;background:#1b1b1b;border:0.7px solid #30303e;border-radius:1.3px"></div><div class="t" style="left:668.75px;width:100px;text-align:center;top:551.42px;font-size:4.5px;color:#e6e6e6;font-weight:normal;-webkit-text-stroke:0.1px #e6e6e6;">Image</div><div class="a" style="left:732px;top:546px;width:24px;height:14.2px;background:#1b1b1b;border:0.7px solid #30303e;border-radius:1.3px"></div><div class="t" style="left:694.0px;width:100px;text-align:center;top:551.42px;font-size:4.5px;color:#e6e6e6;font-weight:normal;-webkit-text-stroke:0.1px #e6e6e6;">Shutter</div><div class="a" style="left:768.4px;top:546px;width:41px;height:14.2px;background:#050505;border:0.6px solid #1e3a1e"></div><div class="a" style="left:768.8px;top:546.5px;width:0.8px;height:13.5px;background:#1f8a2a;"></div><div class="a" style="left:771.3px;top:546.5px;width:0.8px;height:13.5px;background:#1f8a2a;"></div><div class="t" style="left:799px;top:548.01px;font-size:3.8px;color:#8a8a8a;font-weight:normal;">CL 1</div><div class="a" style="left:793px;top:555.3px;width:15px;height:4px;background:#3a3a3a;border-radius:1px"></div><div class="t" style="left:750.5px;width:100px;text-align:center;top:556.78px;font-size:3.3px;color:#999;font-weight:normal;">1001</div><div class="a" style="left:820px;top:546px;width:24px;height:14.2px;background:#1b1b1b;border:0.7px solid #30303e;border-radius:1.3px"></div><div class="t" style="left:782.0px;width:100px;text-align:center;top:548.71px;font-size:3.8px;color:#6a6a6a;font-weight:normal;">Query</div><div class="t" style="left:782.0px;width:100px;text-align:center;top:555.32px;font-size:4.15px;color:#eeeeee;font-weight:normal;-webkit-text-stroke:0.08px #eee;">Make Man</div><div class="a" style="left:846px;top:546px;width:22.5px;height:14.2px;background:#1b1b1b;border:0.7px solid #30303e;border-radius:1.3px"></div><div class="t" style="left:807.25px;width:100px;text-align:center;top:548.71px;font-size:3.8px;color:#6a6a6a;font-weight:normal;">Fan</div><div class="t" style="left:807.25px;width:100px;text-align:center;top:555.32px;font-size:4.15px;color:#eeeeee;font-weight:normal;-webkit-text-stroke:0.08px #eee;">Make Abs</div><div class="a" style="left:870.5px;top:546px;width:23.5px;height:14.2px;background:#1b1b1b;border:0.7px solid #30303e;border-radius:1.3px"></div><div class="t" style="left:832.25px;width:100px;text-align:center;top:548.71px;font-size:3.8px;color:#6a6a6a;font-weight:normal;">Assert</div><div class="t" style="left:832.25px;width:100px;text-align:center;top:555.32px;font-size:4.15px;color:#eeeeee;font-weight:normal;-webkit-text-stroke:0.08px #eee;">Flash</div><div class="a" style="left:896px;top:546px;width:23.5px;height:14.2px;background:#1b1b1b;border:0.7px solid #30303e;border-radius:1.3px"></div><div class="t" style="left:857.75px;width:100px;text-align:center;top:548.71px;font-size:3.8px;color:#6a6a6a;font-weight:normal;">Highlight</div><div class="t" style="left:857.75px;width:100px;text-align:center;top:555.32px;font-size:4.15px;color:#eeeeee;font-weight:normal;-webkit-text-stroke:0.08px #eee;">Cell</div><div class="a" style="left:921px;top:546px;width:23.5px;height:14.2px;background:#1b1b1b;border:0.7px solid #30303e;border-radius:1.3px"></div><div class="t" style="left:882.75px;width:100px;text-align:center;top:548.71px;font-size:3.8px;color:#6a6a6a;font-weight:normal;">Color Path</div><div class="t" style="left:882.75px;width:100px;text-align:center;top:555.32px;font-size:4.15px;color:#eeeeee;font-weight:normal;-webkit-text-stroke:0.08px #eee;">Offset</div><div class="a" style="left:946.5px;top:546px;width:23.0px;height:14.2px;background:#1b1b1b;border:0.7px solid #30303e;border-radius:1.3px"></div><div class="t" style="left:908.0px;width:100px;text-align:center;top:548.71px;font-size:3.8px;color:#6a6a6a;font-weight:normal;">Make Null</div><div class="t" style="left:908.0px;width:100px;text-align:center;top:555.32px;font-size:4.15px;color:#eeeeee;font-weight:normal;-webkit-text-stroke:0.08px #eee;">Mark</div><div class="a" style="left:973px;top:546px;width:23px;height:14.2px;background:#1b1b1b;border:0.7px solid #30303e;border-radius:1.3px"></div><div class="t" style="left:934.5px;width:100px;text-align:center;top:555.32px;font-size:4.15px;color:#eeeeee;font-weight:normal;-webkit-text-stroke:0.08px #eee;">More SK</div><div class="a" style="left:982.5px;top:547.6px;width:3px;height:3px;border-radius:50%;background:#3adb3a"></div></body></html>
